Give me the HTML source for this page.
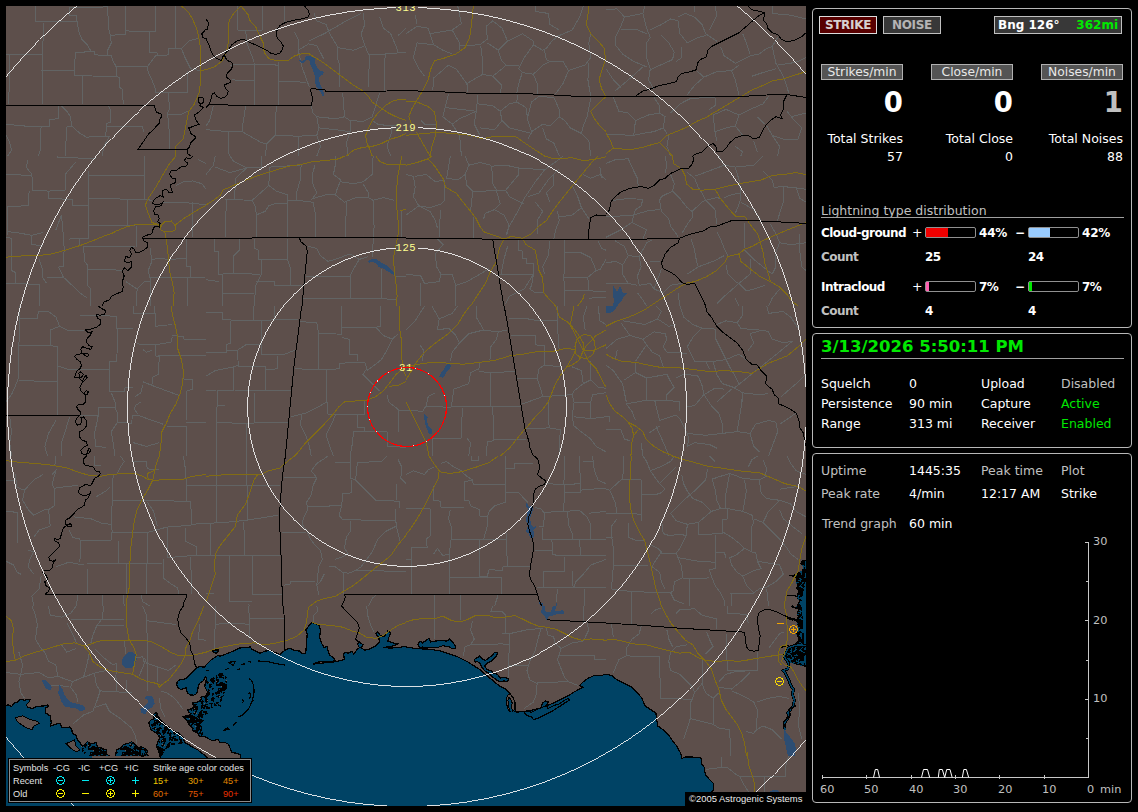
<!DOCTYPE html>
<html><head><meta charset="utf-8"><title>NexStorm</title>
<style>
html,body{margin:0;padding:0;background:#000;}
body{width:1138px;height:812px;position:relative;overflow:hidden;font-family:"DejaVu Sans","Liberation Sans",sans-serif;font-size:12.5px;color:#fff;}
#map{position:absolute;left:6px;top:6px;}
.rl{font-family:"Liberation Mono",monospace;font-size:10.5px;fill:#ffff90;letter-spacing:0.6px;}
.abs{position:absolute;white-space:nowrap;line-height:16px;}
.panel{position:absolute;border:1px solid #b8b8b8;border-radius:4px;box-sizing:border-box;}
.btn{position:absolute;box-sizing:border-box;text-align:center;font-weight:bold;font-size:12px;letter-spacing:-0.3px;line-height:17px;height:18px;}
.lab{position:absolute;box-sizing:border-box;text-align:center;font-size:12.3px;line-height:15px;height:16px;background:#545454;border:1px solid #b0b0b0;color:#e8e8e8;}
.big{position:absolute;font-weight:bold;font-size:27.5px;line-height:26px;text-align:right;}
.r{text-align:right;}
.ax{position:absolute;white-space:nowrap;line-height:14px;font-size:11.3px;color:#c0c0c0;}
.g{color:#c0c0c0;}
.gr{color:#00e800;}
.b{font-weight:bold;font-size:12px;letter-spacing:-0.55px;}
.bar{position:absolute;box-sizing:border-box;width:51px;height:11px;border:1px solid #909090;border-radius:2px;background:#000;}
.bar i{display:block;height:9px;}
.hl{position:absolute;height:1px;background:#a0a0a0;}
#legend{position:absolute;left:0;top:0;width:0;height:0;font-family:"Liberation Sans",sans-serif;font-size:9.2px;}
#legend .in{position:absolute;left:8px;top:758px;width:244px;height:45px;box-sizing:border-box;background:#000;border:1px solid #000;outline:0;box-shadow:inset 0 0 0 1px #8c8c8c;}
#legend span{position:absolute;white-space:nowrap;line-height:11px;color:#e4e4e4;}
#copy{position:absolute;left:685px;top:792px;width:121px;height:14px;background:#000;font-family:"Liberation Sans",sans-serif;font-size:9.45px;line-height:14px;color:#ececec;}
</style></head><body>
<svg id="map" width="800" height="800" viewBox="6 6 800 800" shape-rendering="crispEdges">
<rect x="6" y="6" width="800" height="800" fill="#5d4f4b"/>
<path d="M35.5,6 35.5,21.7 77.1,21.7 M77.1,21.7 76.2,15.2 69.7,15.2 69.7,7.8 107.6,6.9 M77.1,21.7 78.9,31.9 81.7,39.2 87.3,44.8 90.9,51.2 M43.9,22.6 42.9,42.9 42,70.6 42,103.9 M6,54.9 42,54.9 M9.7,54.9 8.8,103.9 M42,70.6 74.3,70.6 M75.3,52.2 74.3,75.3 82.6,75.8 116.8,76.5 M75.3,52.2 94.6,51.8 94.6,54.9 111.3,55.5 M82.6,75.8 82.6,103.9 M107.6,6 108.5,28.2 110.3,35.5 111.3,42.9 107.6,50.3 107.6,54.9 111.3,55.5 113.1,61.4 115.9,66 116.8,76.5 119.6,78 119.6,87.3 122.3,89.1 123.3,103.9 M110.3,35.2 125.1,34.6 125.7,6 M125.7,30.9 155.6,31.9 155.6,6 M150,31.9 149.7,52.2 157.4,53.1 157.4,55.9 M115.9,66 147.3,66.9 M147.3,66.9 155.6,55.9 168.5,54.9 168.5,48.5 181.4,48.5 M147.3,66.9 148.2,72.5 151.9,79.9 155.6,89.1 155.6,92.8 M155.6,92.8 187.9,92.8 187.9,70.6 M175.9,6 175.9,47.6 M181.4,48.5 188.8,41.1 198.1,38.3 M181.4,48.5 185.1,57.7 190.7,68.8 199.9,70.6 M168.5,92.8 169.4,109.4 167.6,113.1 169.4,133.4 169.4,149.1 M167.6,114 179.6,115 187.9,111.3 M58.6,105.7 58.6,118.7 49.4,119.6 49.4,126 24.5,126 6,124.2 M41.1,126 40.2,150 38.3,156 M61.4,105.7 66.9,111.3 70.6,116.8 71.6,126 66.9,127 65.1,156 M71.6,126 79.9,133.4 86.3,137.1 109.4,136.2 M108.5,105.7 110.3,109.4 110.3,122.3 106.6,123.3 105.7,136.2 M106.6,126 142.7,127 143.6,131.6 M109.4,136.2 103.9,146.4 102,156 M6,135.3 9.7,142.7 11.5,150 7.8,156 M237.4,6 237.8,30 245.7,30.9 246.6,40.2 M262.3,6 262.3,30 M237.8,30 262.3,30 M284.5,6 284.5,23.5 M245.7,40.2 254,61.4 254.4,105.7 M230,65.1 254,64.2 278,65.1 M278,61.4 278.9,105.7 M278.9,81.7 305.7,82.1 M231.9,79.9 254,80.8 M298.3,50.3 302,66.9 309.4,87.3 M294.6,31.9 298.3,39.2 298.3,50.3 M308.5,41.1 324.2,33.7 346.4,20.8 361.1,13.4 M298.3,50.3 308.5,43.9 316.8,45.7 324.2,59.6 M329.7,33.7 335.3,42.9 338,47.6 337.1,57.7 339.9,65.1 339,87.3 M338,47.6 353.7,50.3 364.8,45.7 M364.8,45.7 361.1,33.7 364.8,24.5 363,13.4 M364.8,45.7 369.4,55.9 368.5,87.3 M369.4,54.9 385.1,54 406,52.2 M385.1,54 384.2,90.9 M314,13.4 316.8,20.8 326,24.5 329.7,33.7 M379.6,17.1 383.3,28.2 390.7,33.7 396.2,46.6 398.1,52.2 M406,28.2 398.1,35.5 M213.4,105.7 209.7,120.5 206,126 M245.7,105.7 242.9,124.2 242,131.6 228.2,131.6 206,129.7 M228.2,131.6 229.1,156 M242,131.6 261.4,142.7 266.9,143.6 265.1,156 M276.2,105.7 275.3,135.3 298.3,136.2 298.3,156 M266.9,143.6 275.3,135.3 M311.3,105.7 313.1,113.1 316.8,116.8 318.7,127.9 316.8,135.3 298.3,136.2 M316.8,116.8 335.3,118.7 344.5,116.8 342.7,92.8 M344.5,116.8 350,120.5 363,121.4 372.2,116.8 379.6,92.8 M318.7,127.9 335.3,129.7 350,131.6 350,120.5 M350,131.6 346.4,142.7 348.2,156 M316.8,135.3 320.5,146.4 316.8,156 M372.2,120.5 377.7,124.2 390.7,126 406,124.2 M392.5,126 390.7,135.3 387,146.4 390.7,156 M406,33.7 417.1,26.3 428.2,28.2 430,33.7 452.2,30 461.4,23.5 459.6,15.2 457.7,6 M415.2,15.2 417.1,24.5 M430,33.7 433.7,44.8 442.9,50.3 452.2,54 M417.1,42.9 413.4,57.7 418.9,68.8 424.5,76.2 M417.1,42.9 433.7,44.8 M452.2,30 459.6,42.9 459.6,50.3 M459.6,45.7 479.9,44.8 487.3,39.2 486.3,26.3 492.8,20.8 M480.8,45.7 482.6,61.4 482.6,74.3 466.9,83.6 461.4,76.2 455.9,68.8 448.5,65.1 433.7,78 432.8,90 M466.9,83.6 467.9,91.9 M492.8,20.8 502,28.2 507.6,41.1 498.3,50.3 501.1,59.6 505.7,65.1 518.7,66 M498.3,50.3 487.3,42.9 M507.6,41.1 522.3,33.7 533.4,41.1 533.4,44.8 524.2,57.7 518.7,68.8 M482.6,74.3 492.8,76.2 502,68.8 505.7,65.1 M492.8,76.2 502,85.4 500.2,92.8 M518.7,68.8 522.3,72.5 518.7,83.6 516.8,92.8 M522.3,72.5 533.4,74.3 542.7,65.1 550,61.4 563,61.4 568.5,70.6 M533.4,74.3 537.1,83.6 537.1,93.7 M533.4,44.8 542.7,50.3 546.4,48.5 551.9,41.1 559.3,35.5 572.2,30 579.6,17.1 583.3,6 M544.5,50.3 546.4,59.6 550,61.4 M535.3,6 535.3,11.5 548.2,13.4 550,24.5 559.3,30 M568.5,70.6 563,83.6 555.6,93.7 M568.5,70.6 585.1,65.1 590.7,57.7 588.8,42.9 590.7,33.7 M588.8,63.2 587.9,79.9 590.7,96.5 M448.5,93.7 445.7,105.7 442.9,116.8 452.2,124.2 459.6,118.7 476.2,111.3 478,94.6 M445.7,107.6 476.2,111.3 M476.2,111.3 474.3,124.2 479.9,135.3 M478,103.9 492.8,105.7 500.2,111.3 502,120.5 494.6,129.7 479.9,127.9 M500.2,111.3 509.4,103.9 516.8,102 517.7,94.6 M516.8,102 526,107.6 527.9,120.5 531.6,131.6 527.9,139 M502,120.5 509.4,127.9 531.6,133.4 M527.9,116.8 531.6,102 539,96.5 553.7,97.4 M553.7,97.4 559.3,109.4 559.3,116.8 564.8,120.5 570.4,127.9 581.4,133.4 588.8,140.8 590.7,156 M559.3,116.8 550,126 542.7,124.2 531.6,131.6 M590.7,98.3 587,116.8 583.3,126 581.4,133.4 M542.7,127.9 546.4,139 553.7,142.7 559.3,156 M452.2,124.2 459.6,135.3 461.4,156 M420.8,120.5 424.5,124.2 435.5,124.2 M606,9.7 617.1,8.8 624.5,17.1 620.8,26.3 615.2,37.4 615.2,44.8 622.6,54 633.7,61.4 646.6,66.9 M624.5,17.1 633.7,15.2 642.9,13.4 644.8,6 M642.9,13.4 646.6,28.2 650.3,37.4 646.6,42.9 646.6,57.7 650.3,68.8 648.5,79.9 654,89.1 M620.8,30 635.5,29.1 646.6,33.7 M650.3,30 661.4,24.5 670.6,18.9 678,20.8 679.9,33.7 687.3,42.9 M678,17.1 685.4,13.4 694.6,17.1 702,24.5 705.7,33.7 716.8,41.1 M661.4,35.5 668.8,42.9 674.3,52.2 672.5,59.6 650.3,69.7 M681.7,46.6 681.7,57.7 676.2,61.4 M687.3,42.9 698.3,37.4 705.7,35.5 M694.6,6 694.6,11.5 M715,6 716.8,15.2 709.4,30 M606,68.8 613.4,79.9 620.8,87.3 M615.2,90.9 628.2,79.9 642.9,66.9 M720.5,46.6 724.2,55.9 735.3,63.2 750,55.9 759.3,54 766.7,48.5 772.2,46.6 M742.7,33.7 746.4,42.9 750,54 M772.2,46.6 777.7,37.4 M772.2,46.6 775.9,63.2 783.3,76.2 788.8,92.8 M696.5,70.6 703.9,77.1 716.8,71.6 731.6,70.6 739,65.1 M731.6,70.6 735.3,79.9 739,94.6 M703.9,77.1 694.6,85.4 687.3,94.6 M751.9,76.2 763,72.5 775.9,68.8 M806,57.7 798.1,61.4 790.7,63.2 777.7,65.1 M772.2,6 772.2,13.4 790.7,15.2 806,18.9 M613.4,97.4 618.9,111.3 628.2,113.1 635.5,120.5 633.7,135.3 606,134.3 M635.5,120.5 648.5,115 659.6,113.1 665.1,116.8 663.2,127.9 666.9,133.4 M654,97.4 659.6,105.7 659.6,113.1 M670.6,113.1 679.9,103.9 690.9,98.3 715,97.4 M715,98.3 715,105.7 709.4,109.4 M713.1,115 715,131.6 716.8,140.8 M713.1,115 726,109.4 739,115 735.3,126 726,127.9 715,131.6 M739,115 750,109.4 763,103.9 768.5,96.5 M757.4,116.8 764.8,124.2 M735.3,126 742.7,135.3 M633.7,135.3 642.9,133.4 654,131.6 663.2,127.9 M787,111.3 794.4,120.5 801.8,127.9 798.1,139 783.3,139 772.2,135.3 766.7,126 M772.2,135.3 779.6,146.4 777.7,156 M806,113.1 798.1,115 790.7,116.8 M668.8,135.3 666.9,146.4 670.6,156 M753.7,140.8 757.4,151.9 M735.3,146.4 742.7,151.9 740.8,156 M57.7,156 57.7,157.8 96.5,158.2 M28.2,159.7 26.3,167.1 31.9,174.5 32.8,190.2 48.5,191.1 65.1,190.2 M6,174.5 31.9,175.4 M76.2,161.5 65.1,174.5 65.1,190.2 M48.5,191.1 48.5,198.5 72.5,199.4 72.5,205.9 88.2,205.9 M88.2,170.8 88.2,238.2 79.9,238.2 79.9,245.6 M88.2,175.4 144.5,175.4 M144.5,156 144.5,199.4 M88.2,198.5 144.5,199.4 151.9,200.3 M127.9,199.4 127.9,225.3 M88.2,225.3 135.3,225.8 M136.2,226.2 136.2,246.5 M83.6,246.5 135.3,246.5 M83.6,246.5 84.5,261.3 87.3,265 87.3,285.3 90.9,289 90,306 M87.3,269.6 122.3,270.1 M29.1,191.1 28.2,205.9 7.8,206.2 7.8,235.4 M7.8,231.7 17.1,232.6 31.9,235.4 42.9,232.6 M31.9,235.4 31.9,244.6 42.9,245.6 M55.9,229.9 61.4,215.1 63.2,233.6 64.2,248.3 M68.8,239.1 79.9,238.2 M6,237.3 11.5,238.2 11.5,270.5 15.2,272.3 15.2,283.4 M6,283.4 39.2,284.3 39.2,306 M39.2,259.4 42.9,270.5 42.9,277.9 46.6,283.4 M46.6,277 63.2,277 79.9,292.7 87.3,298.2 M58.6,266.8 63.2,277 M64.2,248.3 63.2,266.8 58.6,266.8 M192.5,202.2 192.5,237.3 M163,202.2 192.5,203.1 206,204.9 M175.9,185.5 183.3,181.9 192.5,180.9 201.8,183.7 206,189.2 M206,163.4 198.1,159.7 M150,248.3 151.9,261.3 148.2,270.5 150,277.9 151,306 M151.9,259.4 159.3,258.5 168.5,259.4 186.1,258.5 M186.1,239.1 186.1,266.8 190.7,266.8 190.7,277 M150,277.9 206,277 M126,281.6 137.1,289 136.2,306 M137.1,289 144.5,281.6 150,281.6 M187,277.9 187,306 M261.4,156 261.4,167.1 246.6,168 235.5,178.2 234.6,199.4 M215.2,167.1 230,172.6 246.6,168 M206,174.5 213.4,165.2 215.2,156 M230,156 233.7,161.5 246.6,168 M225.4,199.4 252.2,200.3 268.8,185.5 269.7,167.1 300.2,165.2 M226.3,199.4 225.4,237.3 M252.2,200.3 255.9,207.7 256.8,237.3 M268.8,185.5 276.2,191.1 287.3,194.8 287.3,237.3 M255.9,215.1 265.1,211.4 268.8,205.9 276.2,203.1 287.3,204 M301.1,165.2 300.2,180 296.5,192.9 296.5,200.3 313.1,202.2 315,211.4 315.9,237.3 M287.3,200.3 296.5,200.3 M315,165.2 312.2,174.5 313.1,185.5 316.8,192.9 311.3,200.3 M313.1,198.5 326,194.8 335.3,194.8 344.5,202.2 355.6,197.6 368.5,197.6 373.1,200.3 M335.3,156 335.3,165.2 333.4,174.5 340.8,180 337.1,189.2 335.3,194.8 M346.4,202.2 345.4,237.3 M340.8,181.9 353.7,183.7 363,181.9 372.2,174.5 373.1,156 M363,183.7 368.5,192.9 368.5,197.6 M373.1,200.3 373.1,211.4 374.1,226.2 373.1,242.8 372.2,256.6 M373.1,200.3 383.3,197.6 394.4,200.3 M401.8,209.6 401.8,237.3 M214.3,239.1 214.3,251.1 218.9,252 218.9,274.2 222.6,274.2 222.6,306 M206,279.7 218.9,281.6 M239.2,239.1 239.2,250.2 233.7,255.7 233.7,273.3 M222.6,273.3 259.6,274.2 M254,239.1 254,248.3 258.6,250.2 258.6,259.4 287.3,259.4 M287.3,239.1 287.3,259.4 290,266.8 290,285.3 M261.4,259.4 261.4,274.2 255.9,285.3 254,306 M255.9,281.6 274.3,281.6 274.3,285.3 302,285.3 M222.6,293.6 254,293.6 M308.5,246.5 316.8,248.3 320.5,255.7 327.9,261.3 335.3,259.4 350,253.9 359.3,259.4 368.5,256.6 M359.3,259.4 353.7,268.7 350,276 350,298.2 M305.7,276 350,276 M303,298.2 396.2,299.1 M381.4,268.7 381.4,299.1 M396.2,276 406,277 M406,174.5 413.4,176.3 415.2,187.4 413.4,196.6 418.9,205.9 406,215.1 M418.9,205.9 430,207.7 441.1,204 444.8,200.3 444.8,180 M415.2,176.3 426.3,174.5 435.5,181.9 442.9,180 M450.3,156 448.5,167.1 446.6,178.2 457.7,180 465.1,174.5 468.8,165.2 465.1,156 M465.1,174.5 466.9,185.5 472.5,191.1 471.6,204 470.6,209.6 M468.8,165.2 479.9,162.5 490.9,165.2 492.8,174.5 492.8,183.7 496.5,190.2 472.5,192 M490.9,166.2 505.7,165.2 518.7,168 518.7,174.5 505.7,190.2 496.5,190.2 M518.7,168 531.6,168.9 544.5,169.9 557.4,160.6 563,156 M544.5,169.9 535.3,181.9 527.9,192.9 524.2,198.5 516.8,213.2 509.4,226.2 505.7,235.4 M505.7,190.2 509.4,196.6 524.2,204 M496.5,191.1 500.2,204 494.6,209.6 485.4,213.2 483.6,218.8 M494.6,209.6 503.9,215.1 508.5,224.3 507.6,233.6 M441.1,209.6 439.2,226.2 439.2,237.3 M418.9,205.9 430,211.4 435.5,220.6 437.4,228 M473.4,216.9 473.4,238.2 M559.3,168.9 548.2,180 539,192.9 527.9,196.6 M535.3,202.2 542.7,211.4 537.1,220.6 537.1,233.6 M553.7,174.5 553.7,185.5 546.4,192.9 550,202.2 M557.4,211.4 559.3,220.6 555.6,229.9 553.7,239.1 M572.2,185.5 577.7,196.6 581.4,207.7 572.2,215.1 559.3,216.9 M581.4,207.7 588.8,218.8 M606,180 599.9,174.5 590.7,178.2 583.3,174.5 M599.9,167.1 601.8,178.2 M437.4,239.1 442.9,244.6 435.5,253.9 436.5,266.8 441.1,274.2 439.2,281.6 424.5,283.4 420.8,276 406,274.2 M420.8,283.4 420.8,306 M441.1,274.2 452.2,274.2 455.9,285.3 455.9,306 M455.9,285.3 466.9,281.6 479.9,274.2 489.1,268.7 M518.7,240 518.7,250.2 522.3,251.1 522.3,258.5 526,258.5 526,263.1 533.4,263.1 533.4,274.2 498.3,274.2 M533.4,274.2 531.6,285.3 529.7,289 535.3,292.7 543.6,292.7 M507.6,246.5 503.9,259.4 501.1,274.2 M533.4,274.2 524.2,289 509.4,296.4 505.7,303.7 M550,240.9 548.2,255.7 542.7,266.8 544.5,274.2 M564.8,240 564.8,252 563.9,277.9 564.8,306 M564.8,252 579.6,252 590.7,257.6 596.2,270.5 599.9,269.6 606,259.4 M563.9,277.9 587,277.9 596.2,270.5 M587.9,277.9 588.8,290.8 606,291.7 M564.8,290.8 588.8,290.8 M598.1,240.9 601.8,248.3 606,250.2 M588.8,298.2 606,297.3 M606,163.4 615.2,159.7 628.2,158.8 633.7,170.8 637.4,178.2 638.3,186.5 M665.1,156 666.9,165.2 665.1,172.6 M670.6,174.5 674.3,183.7 672.5,191.1 661.4,196.6 659.6,200.3 661.4,211.4 668.8,218.8 670.6,226.2 676.2,233.6 678,237.3 M672.5,191.1 679.9,198.5 687.3,207.7 691.9,211.4 692.8,216.9 687.3,224.3 681.7,233.6 M613.4,200.3 628.2,198.5 642.9,199.4 641.1,205.9 635.5,209.6 633.7,215.1 606,216.9 M633.7,215.1 648.5,210.5 660.5,209.6 M633.7,215.1 631.9,222.5 639.2,226.2 646.6,229.9 642.9,239.1 M687.3,172.6 694.6,178.2 698.3,187.4 702,192.9 705.7,200.3 715,209.6 716.8,224.3 M694.6,176.3 709.4,170.8 724.2,165.2 718.7,156 M691.9,211.4 702,202.2 705.7,200.3 M705.7,200.3 716.8,197.6 720.5,198.5 M735.3,167.1 739,180 740.8,192.9 739.9,202.2 735.3,213.2 M724.2,165.2 735.3,167.1 753.7,165.2 763,156 M740.8,192.9 731.6,194.8 724.2,197.6 M763,170.8 772.2,180 774.1,187.4 783.3,186.5 790.7,187.4 806,189.2 M783.3,186.5 783.3,202.2 779.6,213.2 777.7,220.6 M740.8,202.2 753.7,209.6 761.1,220.6 M796.2,187.4 799.9,198.5 806,202.2 M744.5,222.5 744.5,248.3 M716.8,231.7 720.5,239.1 724.2,248.3 727.9,255.7 M690.9,239.1 694.6,250.2 696.5,261.3 698.3,266.8 687.3,274.2 M698.3,266.8 713.1,261.3 724.2,255.7 M770.4,224.3 775.9,233.6 779.6,242.8 790.7,244.6 806,242.8 M779.6,242.8 775.9,252 775.9,266.8 772.2,274.2 M799.9,233.6 799.9,252 801.8,266.8 806,270.5 M744.5,250.2 753.7,259.4 763,266.8 772.2,274.2 M726,265 727.9,274.2 735.3,281.6 739,283.4 750,274.2 750,259.4 M739,283.4 724.2,296.4 716.8,303.7 M739,283.4 746.4,290.8 753.7,289 764.8,285.3 M779.6,289 772.2,298.2 768.5,306 M735.3,298.2 739,306 M606,237.3 613.4,233.6 620.8,229.9 631.9,222.5 M615.2,240.9 624.5,246.5 628.2,255.7 639.2,256.6 641.1,266.8 637.4,276 639.2,285.3 650.3,283.4 654,289 M628.2,255.7 622.6,265 622.6,274.2 628.2,283.4 637.4,285.3 M606,263.1 615.2,261.3 622.6,265 M639.2,256.6 646.6,242.8 652.2,240 M650.3,261.3 659.6,261.3 M654,289 659.6,274.2 661.4,268.7 M654,289 663.2,292.7 670.6,285.3 681.7,283.4 M606,283.4 617.1,283.4 628.2,283.4 M637.4,292.7 642.9,300 646.6,306 M678,292.7 679.9,306 M19.9,306 19.9,318.9 37.4,318.9 38.3,311.5 48.5,311.5 55.9,317.1 59.6,326.3 66.9,330 76.2,330.9 83.6,330.9 M79.9,315.2 116.8,316.2 116.8,328.2 133.4,328.2 M133.4,306 133.4,313.4 154.7,313.4 154.7,306 M19.9,318.9 18.9,344.8 18,379.9 11.5,394.6 6,402 M18.9,345.7 50.3,345.7 50.3,330 59.6,326.3 M50.3,345.7 57.7,346.6 57.7,415 M18.9,380.8 56.8,381.3 M57.7,366 68.8,369.7 79.9,369.7 109.4,369.7 M117.7,328.2 116.8,361.4 109.4,361.4 109.4,391.9 124.2,391.9 125.1,387.3 133.4,387.3 M111.3,392.8 115,402 115,407.6 98.3,407.6 98.3,415 96.5,424.2 94.6,433.4 95.6,446.4 105.7,447.3 M79.9,415 98.3,415 M115,407.6 117.7,413.1 117.7,422.3 131.6,423.3 132.5,415 137.1,415 163,424.2 M116.8,423.3 111.3,431.6 113.1,442.7 115,456 M69.7,416.8 65.1,431.6 61.4,442.7 61.4,456 M55.9,420.5 48.5,433.4 44.8,446.4 47.6,456 M9.7,416.8 11.5,431.6 9.7,442.7 11.5,456 M137.1,343.9 155.6,344.8 155.6,355.9 159.3,356.8 158.4,374.3 152.8,377.1 151.9,385.4 M155.6,344.8 171.3,342 172.2,337.4 M155.6,313.4 155.6,326.3 172.2,324.5 M172.2,335.5 183.3,336.5 184.2,339.2 206,339.2 M158.4,355.9 206,355.9 M183.3,378.9 192.5,379.9 192.5,389.1 187,390.9 186.1,420.5 M142.7,381.7 151.9,385.4 179.6,395.6 M142.7,385.4 140.8,392.8 135.3,396.5 M140.8,402 135.3,405.7 134.3,409.4 138,414 M166.7,426 186.1,426 186.1,456 M186.1,422.3 206,422.3 M133.4,442.7 146.4,446.4 159.3,442.7 M142.7,349.4 146.4,352.2 151.9,350.3 M206,312.5 222.6,312.5 222.6,319.9 261.4,320.4 274.3,319.9 298.3,319.9 M253.6,306 253.6,319.9 M274.3,306 274.3,319.9 M230.9,320.8 230.9,342.9 226.3,344.8 226.3,352.2 206,352.2 M261.4,320.8 261.4,354.9 276.2,354.9 285.4,354 294.6,350.3 M226.3,350.3 237.4,350.3 245.7,344.8 259.6,344.8 M237.4,350.3 238.3,365.1 233.7,366.9 233.7,390 217.1,390.9 217.1,405.7 224.5,405.7 M238.3,366 265.1,366 265.1,390 M265.1,369.7 278,368.8 277.1,359.6 277.1,355.9 M233.7,390 290.9,390.6 M206,376.2 215.2,370.6 233.7,366.9 M206,390 216.2,390.9 M217.1,405.7 216.2,422.3 216.2,456 M254,390.9 254.4,422.3 M216.2,422.3 239.2,423.3 288.2,422.3 M246.6,424.2 246.6,456 M300.2,321.7 316.8,322.6 318.7,333.7 318.7,368.8 M294.6,368.8 326,369.7 339,368.8 M318.7,333.7 341.7,334.1 341.7,306 M341.7,327.2 375.9,327.2 380.5,326.3 380.5,306 M341.7,337.4 349.1,339.2 349.1,354 357.4,354.9 357.4,361.4 M339,368.8 339.9,363.2 364.8,362.3 366.7,368.8 363,374.3 368.5,379.9 M375.9,327.2 383.3,335.5 392.5,339.2 398.1,333.7 M392.5,339.2 387,350.3 381.4,359.6 372.2,366.9 366.7,370.6 M326,369.7 327,402 327.9,414 364.8,415 364.8,400.2 M327,402 316.8,407.6 305.7,413.1 290.9,416.8 M302,415 300.2,424.2 305.7,435.3 309.4,446.4 311.3,456 M335.3,415 331.6,424.2 326,435.3 329.7,446.4 333.4,456 M357.4,415 357.4,427.9 364.8,427.9 364.8,431.6 353.7,431.6 351.9,446.4 350,456 M364.8,431.6 387,431.6 387.9,446.4 406,447.3 M387,394.6 388.8,402 398.1,409.4 399,431.6 M398.1,410.3 406,410.3 M368.5,379.9 379.6,390.9 M406,330 415.2,320.8 424.5,306 M431.9,306 439.2,318.9 437.4,330 448.5,328.2 455.9,335.5 459.6,342.9 452.2,352.2 450.3,361.4 M439.2,318.9 452.2,313.4 457.7,306 M419.9,344.8 423.5,350.3 422.6,361.4 M476.2,306 476.2,317.1 481.7,326.3 483.6,330 498.3,331.9 506.6,330 M459.6,342.9 468.8,333.7 483.6,330 M498.3,331.9 496.5,339.2 490.9,346.6 490,359.6 M479.9,363.2 478.9,368.8 470.6,372.5 468.8,383.6 454,389.1 451.2,406.6 M478.9,371.6 490,372.5 515,371.6 M490,372.5 490,406.6 M451.2,406.6 520.5,406.6 M462.3,407.6 461.4,438 432.8,438.6 432.8,456 M492.8,406.6 493.7,440.8 487.3,441.7 486.3,456 M493.7,439 526,439.9 M466.9,438 470.6,442.7 468.8,456 M435.5,392.8 428.2,396.5 426.3,405.7 422.6,411.3 406,410.3 M426.3,406.6 451.2,407.2 M509.4,318.9 527.9,318.9 539,320.8 557.4,320.8 M511.3,335.5 535.3,335.5 535.3,344.8 544.5,345.7 544.5,351.2 M557.4,306 557.4,320.8 558.4,342.9 559.3,350.3 M544.5,352.2 544.5,365.1 561.1,366.9 M516.8,378 537.1,378 539,368.8 544.5,365.1 M537.1,378 540.8,389.1 542.7,396.5 527.9,402 522.3,403.9 M542.7,396.5 559.3,395.6 572.2,394.6 M548.2,402 549.1,427.9 526,428.8 M549.1,427.9 560.2,429.7 559.3,456 M572.2,366.9 581.4,370.6 583.3,383.6 574.1,390.9 572.2,394.6 M572.2,394.6 574.1,402 572.2,416.8 574.1,426 583.3,433.4 590.7,439 596.2,446.4 606,451.9 M574.1,402 590.7,402 592.5,394.6 606,392.8 M574.1,416.8 590.7,418.7 606,416.8 M590.7,402 590.7,418.7 M587,306 583.3,317.1 585.1,330 M598.1,306 599.9,320.8 606,324.5 M590.7,361.4 590.7,379.9 598.1,387.3 606,388.2 M583.3,383.6 590.7,379.9 M620.8,322.6 630,335.5 642.9,339.2 646.6,344.8 635.5,361.4 M646.6,344.8 652.2,352.2 659.6,355.9 663.2,366.9 M642.9,339.2 654,331.9 665.1,333.7 666.9,339.2 663.2,346.6 666.9,352.2 M622.6,320.8 633.7,322.6 644.8,324.5 657.7,318.9 661.4,311.5 655.9,306 M657.7,318.9 668.8,326.3 676.2,324.5 M679.9,306 683.6,317.1 692.8,324.5 702,328.2 715,329.1 M702,328.2 692.8,337.4 687.3,346.6 690.9,354 694.6,361.4 705.7,361.4 709.4,368.8 M715,329.1 715,337.4 720.5,348.5 726,359.6 713.1,361.4 705.7,361.4 M726,359.6 739,354 746.4,359.6 M726,359.6 729.7,366.9 735.3,376.2 739,383.6 M713.1,362.3 716.8,374.3 722.3,383.6 733.4,387.3 742.7,392.8 742.7,402 M735.3,387.3 753.7,372.5 772.2,357.7 792.5,341.1 M698.3,376.2 702,385.4 703.9,394.6 694.6,405.7 687.3,406.6 M703.9,394.6 715,388.2 724.2,389.1 M703.9,394.6 711.3,405.7 718.7,413.1 722.3,424.2 722.3,433.4 M716.8,402 731.6,389.1 M742.7,392.8 740.8,409.4 739,420.5 737.1,431.6 M742.7,392.8 757.4,394.6 768.5,393.7 M687.3,433.4 705.7,435.3 722.3,433.4 737.1,431.6 750,433.4 755.6,424.2 768.5,420.5 775.9,422.3 777.7,431.6 M750,433.4 753.7,446.4 759.3,451.9 M777.7,431.6 772.2,446.4 768.5,456 M779.6,424.2 790.7,416.8 796.2,413.1 M781.4,396.5 796.2,383.6 806,374.3 M737.1,322.6 740.8,328.2 753.7,330 759.3,329.1 M716.8,324.5 726,320.8 737.1,322.6 742.7,315.2 742.7,306 M750,333.7 753.7,342.9 748.2,350.3 M750,333.7 763,330 768.5,331.9 772.2,339.2 783.3,342.9 792.5,341.1 M766.7,306 768.5,313.4 783.3,311.5 790.7,317.1 798.1,328.2 M606,348.5 617.1,339.2 630,335.5 M606,365.1 613.4,370.6 617.1,376.2 622.6,383.6 624.5,392.8 626.3,402 M617.1,350.3 615.2,359.6 M635.5,363.2 635.5,372.5 624.5,379.9 M635.5,372.5 646.6,378 646.6,400.2 M646.6,378 666.9,374.3 670.6,381.7 674.3,387.3 666.9,394.6 666.9,400.2 M626.3,403.9 646.6,400.2 666.9,400.2 679.9,402 679.9,411.3 M654.9,401.1 659.6,420.5 M626.3,403.9 631.9,411.3 635.5,420.5 M659.6,420.5 676.2,415 679.9,418.7 687.3,433.4 689.1,439 687.3,446.4 694.6,442.7 709.4,444.5 716.8,448.2 M648.5,433.4 659.6,426 M655.9,426 665.1,446.4 668.8,456 M606,416.8 609.7,416.8 609.7,422.3 M606,429.7 620.8,429.7 624.5,439 630,440.8 M641.1,442.7 642.9,456 M676.2,378 683.6,374.3 694.6,375.3 698.3,376.2 M687.3,354 676.2,352.2 666.9,352.2 M55.9,456 54.9,465.2 M94.6,456 94.6,465.2 101.1,465.2 M120.5,456 124.2,461.5 120.5,467.1 116.8,474.5 M113.1,475.4 112.2,500.3 111.3,529.9 M133.4,461.5 146.4,461.5 147.3,468.9 159.3,469.9 M183.3,456 185.1,467.1 186.1,480 186.1,501.2 M186.1,485.5 206,485.5 M113.1,500.3 190.7,501.2 191.6,524.3 206,523.4 M147.3,502.2 153.7,511.4 157.4,526.2 M112.2,532.6 147.3,532.6 166.7,527.1 190.7,525.3 M111.3,524.3 102,523.4 90.9,518.8 74.3,516.9 M112.2,529.9 111.3,540 80.8,540.6 79.9,562.2 M118.7,540.6 119,563.1 M147.3,532.6 147.3,563.1 M87.3,564 126,563.1 162,564 M126,564 126,593.6 M146.4,564 146.4,593.6 M87.3,568.7 87.3,593.6 M167.6,527.1 167.6,557.6 179.6,556.6 190.7,555.7 206,555.7 M163,559.4 163,577.9 170.4,583.4 177.7,588 178.7,593.6 M185.1,528 185.1,540.9 196.2,546.5 196.2,554.8 M190.7,556.6 191.6,593.6 M52.2,474.5 55.9,470.8 52.2,483.7 54,488.3 66.9,486.5 78,485.5 M54,488.3 54,505.9 48.5,509.6 50.3,526.2 M15.2,474.5 17.1,487.4 24.5,490.2 33.7,480 42.9,474.5 M6,480.9 15.2,480 M24.5,490.2 22.6,500.3 28.2,509.6 33.7,515.1 44.8,509.6 48.5,509.6 M6,511.4 17.1,512.3 17.1,542.8 M50.3,526.2 39.2,529.9 33.7,537.3 M68.8,529.9 72.5,537.3 79.9,539.1 M96.5,496.6 105.7,491.1 109.4,487.4 M28.2,550.2 33.7,552 30,559.4 28.2,566.8 33.7,574.2 M55.9,566.8 68.8,562.2 83.6,565 M6,561.3 13.4,565 17.1,572.3 20.8,574.2 M41.1,576 39.2,589 31.9,596.4 33.7,606 M78,594.5 76.2,606 M103,594.5 102,606 M123.3,594.5 124.2,606 M140.8,594.5 142.7,601.9 150,606 M216.2,456 216.7,522.5 M246.6,456 247,485.5 247.6,520.6 M206,485.5 279.9,485.5 M206,523.4 224.5,522.5 242.9,520.6 261.4,517.9 278,515.1 M243.9,521.6 244.4,554.8 M210.6,524.3 210.6,555.7 M206,555.7 279.9,555.4 M229.1,555.7 230,601.9 M252.2,555.7 252.5,594.5 281.7,594.5 M206,593.6 214.3,593.6 M230,601.9 252.2,601.9 M248.5,603.7 249.4,606 M283.6,477.2 316.8,477.8 313.1,485.5 311.3,494.8 306.6,502.2 307.6,509.6 303.9,516.9 302,524.3 306.6,529.9 309.4,537.3 313.1,542.8 320.5,550.2 322.3,559.4 318.7,566.8 317.7,576 316.8,585.3 318.7,594.5 M316.8,477.8 311.3,470.8 316.8,463.4 324.2,458.8 327.9,456 M335.3,462.5 350,462.5 350,456 M350,462.5 351,478.2 355.6,480 357.4,462.5 381.4,461.5 387,456 M355.6,480 364.8,489.2 375.9,500.3 399,501.2 399,507.7 M351,480 351,492.9 342.7,493.9 341.7,505.9 308.5,506.2 M341.7,505.9 339,515.1 342.7,519.7 396.2,520.6 M395.3,508.6 396.2,526.2 399.9,540.9 M351,520.6 350,531.7 346.4,537.3 344.5,548.3 348.2,553.9 M281.7,532.1 305.7,532.1 M396.2,526.2 385.1,531.7 377.7,539.1 372.2,552 361.1,566.8 355.6,570.5 M398.1,459.7 401.8,467.1 400.8,478.2 406,483.7 M396.2,483.7 396.2,500.3 M283.6,585.3 290,584.3 290.9,581.6 315,581.2 M335.3,559.4 342.7,556.6 348.2,553.9 M328.8,566.8 335.3,566.8 342.7,572.3 348.2,573.3 355.6,570.5 406,571.4 M343.6,573.3 343.6,593.6 M324.2,574.2 320.5,581.6 316.8,585.3 M368.5,606 372.2,598.2 375.9,595.4 M406,474.5 413.4,470.8 424.5,474.5 428.2,469.9 433.7,467.1 M441.1,463.4 446.6,461.5 454,467.1 461.4,470.8 M471.6,456 471.6,460.6 478.9,460.6 478.9,456 M461.4,471.7 466.9,476.3 472.5,480 473.4,484.6 505.7,484.6 M505.7,456 505.7,468.9 514,468.9 514,463.4 533.4,463 M505.7,468.9 505.7,492.9 518.7,492.9 524.2,498.5 527.9,502.2 M505.7,492.9 505.7,502.2 494.6,505.9 489.1,511.4 487.3,516.9 479.9,516 479.9,509.6 470.6,505.9 468.8,500.3 464.2,500.3 464.2,481.9 472.5,480 M433.7,485.5 433.7,500.3 440.2,501.2 441.1,507.7 464.2,507.7 M406,508.6 430,508.6 430.9,535.4 426.3,539.1 427.2,547.4 411.5,547.4 411.5,593.6 M450.3,509.6 448.5,518.8 451.2,526.2 451.2,539.1 449.4,552 449.4,593.6 M451.2,539.1 479.9,539.5 506.6,539.1 M487.3,516.9 487.3,526.2 483.6,539.1 M479.9,540 479.9,576 487.3,576 489.1,569.6 502,570.5 503,566.8 506.6,566.8 M506.6,532.6 507.2,566.8 529.7,566.8 M450.3,577 479.9,577 501.1,577 501.1,593.6 M433.7,553.9 437.4,548.3 442.9,555.7 449.4,553.9 M406,559.4 411.5,559.4 M564.8,456 563.9,483.7 564.8,496.6 563,511.4 M546.4,483.7 564.8,484.6 579.6,483.7 M579.6,456 580.5,492.9 564.8,492.9 M535.3,507.7 540.8,508.6 544.5,513.2 543.6,526.2 539,526.2 M544.5,512.3 563,511.4 579.6,510.5 587,516.9 590.7,524.3 590.7,539.1 M567.6,512.3 568.5,524.3 572.2,533.6 572.2,539.1 M542.7,528 542.7,539.1 606,539.1 M551.9,540 552.8,554.8 564.8,555.7 606,555.7 M579.6,540 580.5,554.8 M535.3,550.2 552.8,550.2 M564.8,556.6 564.8,571.4 543.6,571.4 543.6,587.1 M572.2,571.4 573.1,587.1 M537.1,587.5 606,588 M606,559.4 590.7,565 583.3,574.2 575.9,581.6 574.1,587.1 M592.5,456 594.4,470.8 598.1,480 606,483.7 M583.3,461.5 594.4,461.5 M580.5,490.2 590.7,489.2 606,488.3 M606,511.4 588.8,513.2 M557.4,589 556.5,601.9 M584.2,589 584.2,606 M434.6,594.5 434.6,606 M460.5,594.5 460.5,606 M498.3,594.5 494.6,606 M606,489.2 609.7,490.2 615.2,502.2 617.1,513.2 641.1,514.2 M609.7,490.2 620.8,480 641.1,479.6 M623.5,456 623.5,467.1 622.6,479.1 M641.1,479.6 642,494.8 641.1,520.6 M642,494.8 659.6,493.9 665.1,489.2 659.6,483.7 650.3,470.8 646.6,461.5 642.9,456 M650.3,470.8 659.6,467.1 670.6,461.5 674.3,456 M659.6,483.7 668.8,474.5 676.2,467.1 M681.7,474.5 683.6,483.7 687.3,491.1 692.8,498.5 702,502.2 711.3,511.4 M670.6,513.2 683.6,500.3 696.5,489.2 705.7,480 707.6,468.9 M670.6,513.2 676.2,520.6 687.3,524.3 698.3,522.5 M698.3,522.5 711.3,511.4 720.5,508.6 727.9,508.6 727.9,518.8 722.3,519.7 722.3,533.6 698.3,534.5 698.3,522.5 M712.2,479.1 715,489.2 716.8,500.3 720.5,508.6 M712.2,479.1 720.5,476.3 729.7,473.5 742.7,478.2 759.3,480 766.7,476.3 M729.7,473.5 726,492.9 725.1,508.6 M744.5,480 746.4,491.1 744.5,502.2 742.7,511.4 M727.9,508.6 742.7,511.4 751.9,515.1 753.7,522.5 751.9,526.2 751.9,552 M759.3,480 761.1,492.9 766.7,498.5 779.6,500.3 M779.6,489.2 790.7,487.4 798.1,486.5 M779.6,500.3 790.7,504 796.2,511.4 806,516.9 M779.6,500.3 768.5,511.4 763,522.5 M753.7,518.8 763,522.5 770.4,529.9 779.6,539.1 787,548.3 790.7,553.9 M779.6,509.6 783.3,518.8 794.4,528 801.8,533.6 M722.3,531.7 731.6,537.3 740.8,544.6 744.5,548.3 735.3,555.7 729.7,557.6 731.6,565 737.1,572.3 742.7,576 753.7,570.5 761.1,568.7 757.4,561.3 755.6,552 751.9,552 744.5,548.3 M715,534.5 715.9,552 724.2,552 726,557.6 M687.3,524.3 686.3,535.4 679.9,548.3 676.2,553 659.6,553 M676.2,553 678,557.6 698.3,561.3 715,562.2 M715,552 715,568.7 709.4,569.6 711.3,576 715,585.3 720.5,592.7 724.2,600 724.2,606 M678,557.6 681.7,566.8 682.6,577.9 674.3,581.6 673.4,590.8 670.6,592.7 M682.6,577.9 689.1,578.8 709.4,577.9 M689.1,578.8 689.1,606 M661.4,519.7 663.2,533.6 668.8,535.4 679.9,534.5 686.3,535.4 M628.2,522.5 628.2,537.3 637.4,540.9 644.8,540.9 M617.1,518.8 611.5,526.2 611.5,535.4 613.4,548.3 613.4,565 611.5,589 631.9,591.7 670.6,592.7 M613.4,565 630,565.9 648.5,565 M650.3,544.6 657.7,548.3 661.4,552 654,563.1 652.2,566.8 M631.9,591.7 631.9,606 M652.2,566.8 659.6,572.3 661.4,581.6 665.1,589 M670.6,592.7 674.3,600 683.6,603.7 M742.7,576 746.4,585.3 753.7,592.7 759.3,589 766.7,587.1 775.9,581.6 783.3,574.2 M757.4,561.3 768.5,563.1 779.6,565 783.3,574.2 M729.7,593.6 753.7,593.6 M731.6,593.6 731.6,606 M766.7,589 768.5,606 M790.7,553.9 798.1,559.4 M606,513.2 617.1,513.2 M606,537.3 613.4,537.3 M748.2,467.1 751.9,459.7 757.4,456 M763,459.7 766.7,468.9 764.8,476.3 M787,456 790.7,463.4 796.2,470.8 806,474.5 M709.4,456 715,461.5 M31.9,606 35.5,615.2 37.4,624.5 35.5,639.2 41.1,648.5 44.8,652.2 M48.5,606 50.3,615.2 61.4,617.1 70.6,613.4 76.2,606 M66.9,622.6 70.6,630 74.3,637.4 76.2,642.9 M70.6,619.9 103.9,619.9 124.2,619.9 M103.9,606 102,618.9 96.5,626.3 92.8,635.5 90.9,642.9 M98.3,625.4 124.2,625.4 M142.7,606 146.4,615.2 147.3,641.1 147.3,690.9 M147.3,620.8 175.9,624.5 M124.2,641.1 126,654 M44.8,652.2 48.5,661.4 55.9,665.1 57.7,676.2 72.5,681.7 83.6,677.1 96.5,672.5 105.7,670.6 M83.6,677.1 87.3,663.2 89.1,654 M94.6,674.3 96.5,685.4 100.2,690.9 96.5,702 92.8,711.3 83.6,715 72.5,724.2 M100.2,690.9 116.8,691.9 131.6,692.8 M116.8,663.2 115.9,676.2 116.8,691.9 M105.7,703.9 109.4,711.3 120.5,718.7 131.6,727.9 135.3,735.3 137.1,744.5 M94.6,707.6 105.7,703.9 M72.5,681.7 70.6,687.3 76.2,694.6 78,702 M18.9,652.2 22.6,665.1 20.8,674.3 18.9,681.7 20.8,692.8 24.5,698.3 M6,672.5 20.8,674.3 M20.8,674.3 39.2,672.5 48.5,678 57.7,676.2 M50.3,685.4 68.8,686.3 M61.4,644.8 66.9,652.2 76.2,648.5 M94.6,648.5 103.9,657.7 113.1,665.1 116.8,663.2 M126,679.9 126,692.8 M157.4,666.9 157.4,681.7 M144.5,657.7 146.4,663.2 157.4,666.9 168.5,670.6 175.9,665.1 M135.3,657.7 142.7,656.8 144.5,663.2 139,676.2 M199.9,624.5 198.1,639.2 206,640.2 M161.1,690.9 166.7,692.8 172.2,696.5 177.7,702 183.3,709.4 M159.3,698.3 161.1,709.4 164.8,716.8 M215.2,606 215.2,624.5 214.3,648.5 M248.5,606 249.4,618 249.4,637.4 M249.4,618 283.6,618.6 M215.2,624.5 222.6,623.5 249.4,624.1 M316.8,606 317.7,611.5 314,615.2 313.1,621.7 M366.7,606 367.6,615.2 370.4,624.5 374.1,631.9 M434.6,606 434.6,639.2 M460.5,606 460.5,619.9 M492.8,606 490.9,611.5 502,611.5 505.7,615.2 505.7,633.7 M472.5,620.8 470.6,630 474.3,639.2 470.6,644.8 465.1,646.6 463.2,655.9 M470.6,644.8 502,643.9 508.5,644.8 M502,633.7 509.4,633.7 508.5,679.9 M509.4,633.7 526,630 542.7,628.2 M540.8,629.1 538,639.2 535.3,650.3 529.7,661.4 527,670.6 529.7,679.9 537.1,683.6 536.2,694.6 533.4,702 524.2,708.5 M508.5,665.1 527.9,665.1 M537.1,682.6 568.5,681.7 577.7,685.4 M546.4,628.2 548.2,635.5 553.7,636.5 554.7,642.9 561.1,648.5 557.4,659.6 561.1,668.8 564.8,678 568.5,681.7 M561.1,648.5 572.2,642.9 583.3,641.1 M559.3,655.9 594.4,655.9 594.4,659.6 606,659.6 M583.3,606 583.3,622.6 M583.3,641.1 588.8,630 587,623.5 M631.9,606 631.9,624.5 M611.5,624.5 613.4,637.4 M641.1,626.3 639.2,633.7 631.9,639.2 626.3,648.5 626.3,655.9 618.9,659.6 613.4,672.5 M626.3,655.9 659.6,656.8 659.6,661.4 660.5,698.3 692.8,699.3 M651.2,613.4 655.9,609.7 661.4,607.8 M676.2,613.4 679.9,609.7 694.6,608.8 702,615.2 716.8,618.9 716.8,629.1 M666.9,630 668.8,639.2 672.5,646.6 M668.8,661.4 670.6,652.2 676.2,646.6 687.3,644.8 M668.8,661.4 670.6,670.6 679.9,674.3 687.3,681.7 692.8,687.3 694.6,692.8 M706.6,631.9 709.4,639.2 713.1,646.6 705.7,654 M702,657.7 702,683.6 694.6,692.8 690,703.9 690.9,716.8 687.3,727.9 683.6,739 M702,683.6 705.7,692.8 713.1,698.3 718.7,692.8 M713.1,698.3 713.1,724.2 718.7,727.9 729.7,729.7 730.7,756 M690.9,718.7 713.1,724.2 M726,633.7 727,659.6 727,670.6 757.4,670.6 M757.4,652.2 757.4,670.6 M727.9,606 727.9,613.4 746.4,614.3 748.2,622.6 M718.7,681.7 726,674.3 735.3,671.6 751.9,670.6 M718.7,687.3 731.6,689.1 742.7,679.9 750,672.5 M731.6,690.9 744.5,696.5 753.7,702 757.4,709.4 756.5,729.7 M757.4,702 768.5,698.3 779.6,696.5 788.8,698.3 M756.5,729.7 763,726 772.2,729.7 777.7,735.3 781.4,739 M746.4,731.6 753.7,733.4 756.5,729.7 M768.5,648.5 779.6,633.7 784.2,631.9 M798.1,692.8 799.9,709.4 798.1,724.2 801.8,739 M721.1,767.5 727.3,767.5 736.1,774.5 739.6,776.3 785.3,776.3 786.1,764 788.8,755.2 M739.6,776.3 743.1,783.3 746.6,788.6 748.4,792.1 M764.2,776.3 764.2,792.1 M721.1,757 721.1,767.5 706.2,769.3" fill="none" stroke="#626464" stroke-width="1"/>
<g fill="#004365" stroke="none"><path d="M6,705.7 7.8,704.8 11.5,706.6 14.3,703 18,702 19.9,699.3 24.5,700.2 30,699.3 29.1,702 26.3,704.8 28.2,707.6 32.8,708.5 36.5,706.6 45.7,705.7 47.6,704.8 48.5,706.6 45.7,707.6 45.7,713.1 50.3,715.9 51.2,722.3 50.3,726 55.9,724.2 60.5,723.3 61.4,727 65.1,727.9 69.7,727 71.6,728.8 72.5,733.4 76.2,735.3 77.1,739 79.9,742.7 82.6,746.4 87.3,741.7 90.9,743.6 96.5,742.7 97.4,747.3 102,748.2 106.6,750 106.6,753.7 109.4,756 6,756Z"/><path d="M115,756 116.8,750 120.5,748.2 123.3,744.5 127.9,743.6 131.6,741.7 135.3,744.5 139,748.2 144.5,750 148.2,756Z"/><path d="M259.9,653.1 265.1,651.2 269.7,650.3 274.3,652.2 279.9,654.4 283.6,651.2 289.1,648.1 294.6,650.3 300.2,651.2 302,654 305.7,653.1 306.6,642.9 307.2,633.7 305.7,630 308.5,626.3 312.2,622.3 315,623.5 318.7,624.5 320.5,630 319.6,637.4 321.4,642.9 324.2,647.6 327,646.6 327.9,650.3 329.7,654.9 333.4,657.7 335.3,660.5 331.6,661.4 324.2,661.4 316.8,662.3 313.1,664.2 320.5,663.2 331.6,662.3 339,661 344.5,659.6 343.6,654.9 344.5,652.2 348.2,653.1 351.9,651.2 353.7,654 356.5,650.3 359.3,647.6 357.4,643.9 359.3,642 363,644.8 361.1,647.6 364.8,650.3 368.5,649.4 372.2,647.6 375.9,645.7 379.6,642 378.7,637.4 375.9,633.7 377.7,631.9 380.5,635.5 384.2,636.5 386.1,633.7 387.9,630.9 390.7,632.8 388.8,637.4 387.9,641.1 392.5,642.9 398.1,643.9 394.4,645.7 388.8,646.6 383.3,647.6 390.7,648.1 398.1,647.6 406,646.3 406,756 259.9,756Z"/><path d="M406,647 413.4,648.1 420.8,648.8 430,649.4 439.2,650.7 448.5,653.6 457.7,656.8 466.9,661.4 474.3,666 479.9,669.7 485.4,674.3 490.9,678.9 496.5,683.6 500.2,686.3 505.7,689.1 509.4,692.8 512.2,696.5 515,702 515.9,707.6 515,711.3 516.8,712.2 524.2,711.3 531.6,710.3 539,708.5 546.4,705.7 553.7,703 561.1,699.3 568.5,695.6 574.1,691.9 579.6,689.1 583.3,687.3 579.6,685.4 583.3,681.7 587,678.9 590.7,677.1 594.4,675.3 598.1,675.8 601.8,675.3 606,674.3 606,756 406,756Z"/><path d="M418,644.8 419.9,641.1 422.6,642.9 426.3,640.2 429.1,638.3 430.9,642 435.5,641.1 441.1,640.2 446.6,641.1 449.4,639.2 452.2,642 454.9,644.8 455.5,648.5 452.2,648.8 448.5,646.6 442.9,645.7 437.4,647.6 431.9,647.6 426.3,648.1 422.6,647 419.9,647.6Z"/><path d="M474.3,659.6 477.1,657.7 479.9,655.9 481.7,658.6 485.4,660.5 489.1,657.7 492.8,654.9 494.6,652.2 497.4,653.1 496.5,655.9 493.7,658.6 490.9,661.4 487.3,663.2 484.5,666 487.3,669.7 490.9,670.6 493.7,673.4 497.4,674.3 500.2,678 504.8,677.1 508.5,678.9 507.6,681.7 503.9,680.8 500.2,681.7 496.5,679.9 492.8,677.1 489.1,673.4 484.5,670.6 481.7,666.9 479.9,663.2 477.1,661.4 475.3,662.3Z"/><path d="M524.2,712.2 527.9,711.3 531.6,712.2 535.3,710.3 540.8,707.6 542.7,703 545.4,701.1 548.2,702 546.4,705.7 548.2,708.5 553.7,705.7 559.3,703.9 564.8,700.2 568.5,698.3 569.4,700.2 564.8,703 559.3,706.6 553.7,710.3 548.2,713.1 542.7,715.9 537.1,718.7 533.4,719.6 531.6,716.8 527.9,715.9 525.1,714Z"/><path d="M606,674.3 611.5,675.3 617.1,679.9 624.5,683.6 631.9,687.3 637.4,692.8 642,698.3 644.8,705.7 650.3,709.4 655.9,713.1 656.8,720.5 657.7,726 663.2,729.7 668.8,735.3 672.5,740.8 677.1,746.4 679.9,751.9 681.7,756 606,756Z"/><path d="M606,755.2 681.7,755.9 681.6,758.7 685.1,757 692.1,757 700.9,757.8 701.8,764 704.4,767.5 705.3,774.5 709.7,779.8 713.2,783.3 713.2,790.4 711.4,792.1 711.4,807.1 606,807.1Z"/><path d="M248,749 608,749 608,806 248,806Z"/><path d="M6,758 260,758 260,806 6,806Z"/><path d="M6,755 92,755 92,759 6,759Z"/><path d="M160,755 206,755 206,759 160,759Z"/><path d="M260,653.3 255.9,651.2 252.1,649.4 250.2,647 239.2,648.1 235.3,650 232,651.7 228.6,652.8 225.3,654.4 222,655.5 219.8,656.1 217.6,655.5 214.2,657.8 210.9,660 208.7,662.2 206.5,664.4 204.3,667.2 199.8,666.6 196.5,667.7 194.3,669.9 192.1,672.2 188.8,675.5 185.4,678.8 182.1,679.7 178.8,680.1 177.1,682.1 176.8,684.9 178.2,687.7 180.4,689.3 183.8,688.8 186,687.7 186.5,690.4 187.6,693.2 190.4,694.9 193.7,695.2 196.5,693.8 197.6,691 198.2,686.6 199.8,683.2 202,681.6 203.7,680.5 204.3,677.7 205.4,676.6 206.5,678.8 205.4,682.1 204.8,686.6 207.6,692.1 205.4,696.5 200.9,697.1 201.5,699.3 197.6,702.1 193.2,702.1 192.6,704.3 194.3,706.5 192.1,708.7 187.6,709.8 188.8,712 191,713.7 188.8,715.4 182.7,716.5 186.5,719.9 188.8,724.3 192.1,727.7 193.2,731 197.6,733.2 199.8,736.5 204.3,736.5 208.7,738.8 213.1,741 217.6,739.3 219.8,742.1 225.3,742.6 228.6,744.3 230.3,748.7 232,752.6 236.4,753.2 240.3,754.8 240.8,758 260,758Z"/><path d="M148.9,722.1 151.1,719.9 154.4,718.8 153.3,714.4 156.6,712.2 157.7,715.5 162.2,722.1 167.7,726.6 173.2,731 178.8,733.2 183.2,737.6 184.3,742.1 189.9,745.4 193.2,747.6 197.6,749.8 202,753.2 206.5,756.5 207.6,758 160.5,758 158.8,752 156.6,746.5 157.7,742.1 159.9,737.6 156.6,733.2 151.1,729.9 149.4,725.5Z"/><path d="M140,746.5 143.3,747.6 146.6,749.8 147.8,752 145.5,755.4 142.2,756.5 140,755.4Z"/><path d="M212.6,650 213.1,652.2 216.5,653.3 218.1,651.1 218.1,650Z"/><path d="M806,560 801,560.6 800.3,564.3 803.4,566.8 801.6,570.5 798.5,572.3 794.2,574.2 792.9,576.6 796.6,578.5 795.4,582.2 797.3,585.2 796,588.9 798.5,591.4 796.6,594.5 797.3,598.2 799.1,601.3 797.3,604.3 795.4,607.4 797.9,609.9 796.6,613.6 797.9,616.7 796,620.3 797.3,624 798.5,627.7 797.3,631.4 795.4,633.9 797.9,637 798.5,640 796,642.5 792.9,645 789.3,646.2 786.8,648.1 787.4,651.7 786.8,655.4 786.2,660 789.3,662.2 796.6,664.7 806,667.1Z"/></g>
<path d="M15.2,717.7 22.6,715.9 30,719.6 37.4,721.4 39.2,723.3 33.7,726 31.9,729.7 26.3,727.9 20.8,724.2 17.1,721.4Z M66,743.6 70.6,741.7 74.3,739.9 76.2,746.4 79.9,750 76.2,751.9 70.6,748.2Z M507.2,696.5 508.7,694.3 511.3,695 513.8,698.7 515,703.9 514.6,709 512.7,711.3 511.6,707.6 512.2,703 510.9,699.3 509,697.4 507.9,700.2 508.5,705.7 510.3,712.2 508.5,710.3 506.8,704.8 506.3,699.3Z" fill="#5d4f4b" stroke="#000" stroke-width="1"/>
<defs><pattern id="mp2" width="32" height="32" patternUnits="userSpaceOnUse"><path d="M0,0h1v1h-1zM0,1h1v1h-1zM0,6h1v1h-1zM0,7h1v1h-1zM0,8h1v1h-1zM0,11h1v1h-1zM0,12h1v1h-1zM0,13h1v1h-1zM0,14h1v1h-1zM0,15h1v1h-1zM0,16h1v1h-1zM0,17h1v1h-1zM0,18h1v1h-1zM0,19h1v1h-1zM0,20h1v1h-1zM0,23h1v1h-1zM0,24h1v1h-1zM0,29h1v1h-1zM0,30h1v1h-1zM0,31h1v1h-1zM1,0h1v1h-1zM1,1h1v1h-1zM1,2h1v1h-1zM1,4h1v1h-1zM1,5h1v1h-1zM1,6h1v1h-1zM1,7h1v1h-1zM1,9h1v1h-1zM1,12h1v1h-1zM1,13h1v1h-1zM1,14h1v1h-1zM1,15h1v1h-1zM1,16h1v1h-1zM1,17h1v1h-1zM1,18h1v1h-1zM1,19h1v1h-1zM1,20h1v1h-1zM1,24h1v1h-1zM1,31h1v1h-1zM2,0h1v1h-1zM2,1h1v1h-1zM2,2h1v1h-1zM2,3h1v1h-1zM2,4h1v1h-1zM2,5h1v1h-1zM2,8h1v1h-1zM2,9h1v1h-1zM2,10h1v1h-1zM2,12h1v1h-1zM2,13h1v1h-1zM2,14h1v1h-1zM2,15h1v1h-1zM2,16h1v1h-1zM2,17h1v1h-1zM2,18h1v1h-1zM2,19h1v1h-1zM2,20h1v1h-1zM2,25h1v1h-1zM2,26h1v1h-1zM2,27h1v1h-1zM2,28h1v1h-1zM2,29h1v1h-1zM2,30h1v1h-1zM2,31h1v1h-1zM3,0h1v1h-1zM3,1h1v1h-1zM3,2h1v1h-1zM3,3h1v1h-1zM3,4h1v1h-1zM3,5h1v1h-1zM3,7h1v1h-1zM3,8h1v1h-1zM3,9h1v1h-1zM3,10h1v1h-1zM3,11h1v1h-1zM3,13h1v1h-1zM3,14h1v1h-1zM3,15h1v1h-1zM3,16h1v1h-1zM3,17h1v1h-1zM3,18h1v1h-1zM3,19h1v1h-1zM3,20h1v1h-1zM3,25h1v1h-1zM3,26h1v1h-1zM3,27h1v1h-1zM3,28h1v1h-1zM3,29h1v1h-1zM3,30h1v1h-1zM3,31h1v1h-1zM4,0h1v1h-1zM4,2h1v1h-1zM4,3h1v1h-1zM4,4h1v1h-1zM4,5h1v1h-1zM4,6h1v1h-1zM4,7h1v1h-1zM4,10h1v1h-1zM4,11h1v1h-1zM4,13h1v1h-1zM4,14h1v1h-1zM4,15h1v1h-1zM4,16h1v1h-1zM4,17h1v1h-1zM4,18h1v1h-1zM4,19h1v1h-1zM4,20h1v1h-1zM4,21h1v1h-1zM4,23h1v1h-1zM4,24h1v1h-1zM4,25h1v1h-1zM4,26h1v1h-1zM4,27h1v1h-1zM4,28h1v1h-1zM4,29h1v1h-1zM4,30h1v1h-1zM4,31h1v1h-1zM5,2h1v1h-1zM5,3h1v1h-1zM5,4h1v1h-1zM5,5h1v1h-1zM5,10h1v1h-1zM5,11h1v1h-1zM5,12h1v1h-1zM5,13h1v1h-1zM5,14h1v1h-1zM5,15h1v1h-1zM5,16h1v1h-1zM5,17h1v1h-1zM5,18h1v1h-1zM5,19h1v1h-1zM5,20h1v1h-1zM5,21h1v1h-1zM5,22h1v1h-1zM5,23h1v1h-1zM5,24h1v1h-1zM5,25h1v1h-1zM5,26h1v1h-1zM5,27h1v1h-1zM5,28h1v1h-1zM6,3h1v1h-1zM6,8h1v1h-1zM6,9h1v1h-1zM6,10h1v1h-1zM6,11h1v1h-1zM6,12h1v1h-1zM6,13h1v1h-1zM6,14h1v1h-1zM6,15h1v1h-1zM6,16h1v1h-1zM6,17h1v1h-1zM6,19h1v1h-1zM6,20h1v1h-1zM6,21h1v1h-1zM6,22h1v1h-1zM6,23h1v1h-1zM6,24h1v1h-1zM6,25h1v1h-1zM6,26h1v1h-1zM6,28h1v1h-1zM6,29h1v1h-1zM7,3h1v1h-1zM7,4h1v1h-1zM7,5h1v1h-1zM7,8h1v1h-1zM7,9h1v1h-1zM7,10h1v1h-1zM7,11h1v1h-1zM7,12h1v1h-1zM7,13h1v1h-1zM7,14h1v1h-1zM7,15h1v1h-1zM7,16h1v1h-1zM7,17h1v1h-1zM7,18h1v1h-1zM7,19h1v1h-1zM7,20h1v1h-1zM7,21h1v1h-1zM7,22h1v1h-1zM7,23h1v1h-1zM7,24h1v1h-1zM7,25h1v1h-1zM7,28h1v1h-1zM7,29h1v1h-1zM7,30h1v1h-1zM7,31h1v1h-1zM8,3h1v1h-1zM8,4h1v1h-1zM8,5h1v1h-1zM8,7h1v1h-1zM8,8h1v1h-1zM8,9h1v1h-1zM8,10h1v1h-1zM8,11h1v1h-1zM8,12h1v1h-1zM8,14h1v1h-1zM8,15h1v1h-1zM8,16h1v1h-1zM8,17h1v1h-1zM8,18h1v1h-1zM8,19h1v1h-1zM8,21h1v1h-1zM8,22h1v1h-1zM8,23h1v1h-1zM8,24h1v1h-1zM8,25h1v1h-1zM8,26h1v1h-1zM8,27h1v1h-1zM8,28h1v1h-1zM8,29h1v1h-1zM8,30h1v1h-1zM8,31h1v1h-1zM9,1h1v1h-1zM9,2h1v1h-1zM9,3h1v1h-1zM9,4h1v1h-1zM9,6h1v1h-1zM9,7h1v1h-1zM9,8h1v1h-1zM9,9h1v1h-1zM9,10h1v1h-1zM9,11h1v1h-1zM9,12h1v1h-1zM9,13h1v1h-1zM9,14h1v1h-1zM9,15h1v1h-1zM9,16h1v1h-1zM9,17h1v1h-1zM9,18h1v1h-1zM9,19h1v1h-1zM9,20h1v1h-1zM9,21h1v1h-1zM9,22h1v1h-1zM9,23h1v1h-1zM9,24h1v1h-1zM9,25h1v1h-1zM9,26h1v1h-1zM9,29h1v1h-1zM9,30h1v1h-1zM9,31h1v1h-1zM10,0h1v1h-1zM10,1h1v1h-1zM10,2h1v1h-1zM10,3h1v1h-1zM10,6h1v1h-1zM10,7h1v1h-1zM10,8h1v1h-1zM10,10h1v1h-1zM10,11h1v1h-1zM10,12h1v1h-1zM10,13h1v1h-1zM10,14h1v1h-1zM10,16h1v1h-1zM10,17h1v1h-1zM10,18h1v1h-1zM10,21h1v1h-1zM10,22h1v1h-1zM10,23h1v1h-1zM10,24h1v1h-1zM10,25h1v1h-1zM10,26h1v1h-1zM10,27h1v1h-1zM10,28h1v1h-1zM10,29h1v1h-1zM10,30h1v1h-1zM10,31h1v1h-1zM11,1h1v1h-1zM11,3h1v1h-1zM11,4h1v1h-1zM11,7h1v1h-1zM11,8h1v1h-1zM11,10h1v1h-1zM11,12h1v1h-1zM11,13h1v1h-1zM11,14h1v1h-1zM11,15h1v1h-1zM11,16h1v1h-1zM11,17h1v1h-1zM11,19h1v1h-1zM11,20h1v1h-1zM11,21h1v1h-1zM11,22h1v1h-1zM11,23h1v1h-1zM11,24h1v1h-1zM11,25h1v1h-1zM11,26h1v1h-1zM11,27h1v1h-1zM11,28h1v1h-1zM11,29h1v1h-1zM12,1h1v1h-1zM12,2h1v1h-1zM12,3h1v1h-1zM12,4h1v1h-1zM12,7h1v1h-1zM12,8h1v1h-1zM12,12h1v1h-1zM12,13h1v1h-1zM12,14h1v1h-1zM12,15h1v1h-1zM12,16h1v1h-1zM12,17h1v1h-1zM12,18h1v1h-1zM12,19h1v1h-1zM12,20h1v1h-1zM12,21h1v1h-1zM12,22h1v1h-1zM12,23h1v1h-1zM12,24h1v1h-1zM12,25h1v1h-1zM13,0h1v1h-1zM13,1h1v1h-1zM13,2h1v1h-1zM13,7h1v1h-1zM13,8h1v1h-1zM13,9h1v1h-1zM13,10h1v1h-1zM13,11h1v1h-1zM13,15h1v1h-1zM13,16h1v1h-1zM13,17h1v1h-1zM13,18h1v1h-1zM13,19h1v1h-1zM13,20h1v1h-1zM13,21h1v1h-1zM13,22h1v1h-1zM13,24h1v1h-1zM13,25h1v1h-1zM13,26h1v1h-1zM13,27h1v1h-1zM13,28h1v1h-1zM13,29h1v1h-1zM14,0h1v1h-1zM14,2h1v1h-1zM14,3h1v1h-1zM14,4h1v1h-1zM14,7h1v1h-1zM14,8h1v1h-1zM14,9h1v1h-1zM14,10h1v1h-1zM14,15h1v1h-1zM14,16h1v1h-1zM14,17h1v1h-1zM14,18h1v1h-1zM14,19h1v1h-1zM14,20h1v1h-1zM14,21h1v1h-1zM14,22h1v1h-1zM14,23h1v1h-1zM14,24h1v1h-1zM14,25h1v1h-1zM14,26h1v1h-1zM14,27h1v1h-1zM14,28h1v1h-1zM14,29h1v1h-1zM14,30h1v1h-1zM15,0h1v1h-1zM15,2h1v1h-1zM15,3h1v1h-1zM15,4h1v1h-1zM15,8h1v1h-1zM15,9h1v1h-1zM15,10h1v1h-1zM15,11h1v1h-1zM15,14h1v1h-1zM15,16h1v1h-1zM15,20h1v1h-1zM15,21h1v1h-1zM15,22h1v1h-1zM15,23h1v1h-1zM15,24h1v1h-1zM15,27h1v1h-1zM15,28h1v1h-1zM15,29h1v1h-1zM16,3h1v1h-1zM16,4h1v1h-1zM16,8h1v1h-1zM16,9h1v1h-1zM16,10h1v1h-1zM16,12h1v1h-1zM16,13h1v1h-1zM16,14h1v1h-1zM16,17h1v1h-1zM16,18h1v1h-1zM16,19h1v1h-1zM16,20h1v1h-1zM16,21h1v1h-1zM16,22h1v1h-1zM16,23h1v1h-1zM17,3h1v1h-1zM17,4h1v1h-1zM17,9h1v1h-1zM17,10h1v1h-1zM17,11h1v1h-1zM17,12h1v1h-1zM17,13h1v1h-1zM17,14h1v1h-1zM17,15h1v1h-1zM17,18h1v1h-1zM17,19h1v1h-1zM17,20h1v1h-1zM17,21h1v1h-1zM17,22h1v1h-1zM17,24h1v1h-1zM17,31h1v1h-1zM18,3h1v1h-1zM18,4h1v1h-1zM18,7h1v1h-1zM18,8h1v1h-1zM18,10h1v1h-1zM18,11h1v1h-1zM18,12h1v1h-1zM18,13h1v1h-1zM18,14h1v1h-1zM18,15h1v1h-1zM18,23h1v1h-1zM18,24h1v1h-1zM18,25h1v1h-1zM18,26h1v1h-1zM18,31h1v1h-1zM19,0h1v1h-1zM19,1h1v1h-1zM19,2h1v1h-1zM19,3h1v1h-1zM19,4h1v1h-1zM19,5h1v1h-1zM19,6h1v1h-1zM19,7h1v1h-1zM19,8h1v1h-1zM19,9h1v1h-1zM19,11h1v1h-1zM19,12h1v1h-1zM19,14h1v1h-1zM19,23h1v1h-1zM19,24h1v1h-1zM19,25h1v1h-1zM19,26h1v1h-1zM19,27h1v1h-1zM19,28h1v1h-1zM19,31h1v1h-1zM20,3h1v1h-1zM20,4h1v1h-1zM20,5h1v1h-1zM20,6h1v1h-1zM20,7h1v1h-1zM20,8h1v1h-1zM20,9h1v1h-1zM20,10h1v1h-1zM20,11h1v1h-1zM20,12h1v1h-1zM20,15h1v1h-1zM20,16h1v1h-1zM20,17h1v1h-1zM20,21h1v1h-1zM20,22h1v1h-1zM20,23h1v1h-1zM20,24h1v1h-1zM20,25h1v1h-1zM20,26h1v1h-1zM20,27h1v1h-1zM20,28h1v1h-1zM20,30h1v1h-1zM20,31h1v1h-1zM21,3h1v1h-1zM21,4h1v1h-1zM21,5h1v1h-1zM21,6h1v1h-1zM21,7h1v1h-1zM21,8h1v1h-1zM21,9h1v1h-1zM21,10h1v1h-1zM21,11h1v1h-1zM21,12h1v1h-1zM21,15h1v1h-1zM21,16h1v1h-1zM21,17h1v1h-1zM21,21h1v1h-1zM21,22h1v1h-1zM21,25h1v1h-1zM21,26h1v1h-1zM21,27h1v1h-1zM21,28h1v1h-1zM21,29h1v1h-1zM21,30h1v1h-1zM21,31h1v1h-1zM22,0h1v1h-1zM22,1h1v1h-1zM22,3h1v1h-1zM22,4h1v1h-1zM22,5h1v1h-1zM22,6h1v1h-1zM22,8h1v1h-1zM22,9h1v1h-1zM22,11h1v1h-1zM22,13h1v1h-1zM22,15h1v1h-1zM22,16h1v1h-1zM22,17h1v1h-1zM22,18h1v1h-1zM22,26h1v1h-1zM22,27h1v1h-1zM22,29h1v1h-1zM22,30h1v1h-1zM22,31h1v1h-1zM23,0h1v1h-1zM23,1h1v1h-1zM23,3h1v1h-1zM23,4h1v1h-1zM23,5h1v1h-1zM23,13h1v1h-1zM23,14h1v1h-1zM23,17h1v1h-1zM23,18h1v1h-1zM23,20h1v1h-1zM23,21h1v1h-1zM23,27h1v1h-1zM23,28h1v1h-1zM23,29h1v1h-1zM23,30h1v1h-1zM23,31h1v1h-1zM24,0h1v1h-1zM24,1h1v1h-1zM24,2h1v1h-1zM24,3h1v1h-1zM24,4h1v1h-1zM24,5h1v1h-1zM24,6h1v1h-1zM24,7h1v1h-1zM24,8h1v1h-1zM24,9h1v1h-1zM24,10h1v1h-1zM24,11h1v1h-1zM24,12h1v1h-1zM24,13h1v1h-1zM24,14h1v1h-1zM24,15h1v1h-1zM24,16h1v1h-1zM24,20h1v1h-1zM24,21h1v1h-1zM24,22h1v1h-1zM24,24h1v1h-1zM24,26h1v1h-1zM24,27h1v1h-1zM24,28h1v1h-1zM24,29h1v1h-1zM24,30h1v1h-1zM24,31h1v1h-1zM25,0h1v1h-1zM25,1h1v1h-1zM25,2h1v1h-1zM25,5h1v1h-1zM25,6h1v1h-1zM25,7h1v1h-1zM25,8h1v1h-1zM25,9h1v1h-1zM25,10h1v1h-1zM25,12h1v1h-1zM25,13h1v1h-1zM25,14h1v1h-1zM25,15h1v1h-1zM25,16h1v1h-1zM25,19h1v1h-1zM25,20h1v1h-1zM25,21h1v1h-1zM25,24h1v1h-1zM25,26h1v1h-1zM25,27h1v1h-1zM25,30h1v1h-1zM25,31h1v1h-1zM26,0h1v1h-1zM26,1h1v1h-1zM26,2h1v1h-1zM26,3h1v1h-1zM26,5h1v1h-1zM26,6h1v1h-1zM26,7h1v1h-1zM26,8h1v1h-1zM26,9h1v1h-1zM26,12h1v1h-1zM26,13h1v1h-1zM26,14h1v1h-1zM26,16h1v1h-1zM26,17h1v1h-1zM26,18h1v1h-1zM26,19h1v1h-1zM26,20h1v1h-1zM26,21h1v1h-1zM26,23h1v1h-1zM26,24h1v1h-1zM26,25h1v1h-1zM26,30h1v1h-1zM26,31h1v1h-1zM27,0h1v1h-1zM27,1h1v1h-1zM27,2h1v1h-1zM27,3h1v1h-1zM27,4h1v1h-1zM27,5h1v1h-1zM27,6h1v1h-1zM27,11h1v1h-1zM27,12h1v1h-1zM27,13h1v1h-1zM27,14h1v1h-1zM27,16h1v1h-1zM27,18h1v1h-1zM27,19h1v1h-1zM27,20h1v1h-1zM27,21h1v1h-1zM27,22h1v1h-1zM27,23h1v1h-1zM27,24h1v1h-1zM27,25h1v1h-1zM27,30h1v1h-1zM27,31h1v1h-1zM28,0h1v1h-1zM28,1h1v1h-1zM28,2h1v1h-1zM28,3h1v1h-1zM28,4h1v1h-1zM28,5h1v1h-1zM28,8h1v1h-1zM28,10h1v1h-1zM28,11h1v1h-1zM28,12h1v1h-1zM28,13h1v1h-1zM28,16h1v1h-1zM28,17h1v1h-1zM28,18h1v1h-1zM28,19h1v1h-1zM28,22h1v1h-1zM28,23h1v1h-1zM28,24h1v1h-1zM28,25h1v1h-1zM28,27h1v1h-1zM28,28h1v1h-1zM28,29h1v1h-1zM29,0h1v1h-1zM29,1h1v1h-1zM29,2h1v1h-1zM29,3h1v1h-1zM29,4h1v1h-1zM29,5h1v1h-1zM29,7h1v1h-1zM29,8h1v1h-1zM29,9h1v1h-1zM29,10h1v1h-1zM29,11h1v1h-1zM29,12h1v1h-1zM29,13h1v1h-1zM29,14h1v1h-1zM29,16h1v1h-1zM29,17h1v1h-1zM29,18h1v1h-1zM29,19h1v1h-1zM29,20h1v1h-1zM29,22h1v1h-1zM29,24h1v1h-1zM29,25h1v1h-1zM29,26h1v1h-1zM29,27h1v1h-1zM29,28h1v1h-1zM29,29h1v1h-1zM29,30h1v1h-1zM29,31h1v1h-1zM30,0h1v1h-1zM30,1h1v1h-1zM30,2h1v1h-1zM30,3h1v1h-1zM30,5h1v1h-1zM30,7h1v1h-1zM30,8h1v1h-1zM30,9h1v1h-1zM30,10h1v1h-1zM30,11h1v1h-1zM30,12h1v1h-1zM30,13h1v1h-1zM30,14h1v1h-1zM30,15h1v1h-1zM30,16h1v1h-1zM30,17h1v1h-1zM30,18h1v1h-1zM30,24h1v1h-1zM30,25h1v1h-1zM30,26h1v1h-1zM30,27h1v1h-1zM30,28h1v1h-1zM30,29h1v1h-1zM30,30h1v1h-1zM30,31h1v1h-1zM31,0h1v1h-1zM31,1h1v1h-1zM31,3h1v1h-1zM31,5h1v1h-1zM31,6h1v1h-1zM31,7h1v1h-1zM31,8h1v1h-1zM31,9h1v1h-1zM31,11h1v1h-1zM31,12h1v1h-1zM31,13h1v1h-1zM31,14h1v1h-1zM31,15h1v1h-1zM31,16h1v1h-1zM31,17h1v1h-1zM31,18h1v1h-1zM31,20h1v1h-1zM31,21h1v1h-1zM31,23h1v1h-1zM31,24h1v1h-1zM31,25h1v1h-1zM31,26h1v1h-1zM31,28h1v1h-1zM31,29h1v1h-1zM31,30h1v1h-1zM31,31h1v1h-1z" fill="#000"/></pattern><pattern id="mp" width="32" height="32" patternUnits="userSpaceOnUse"><path d="M0,11h1v1h-1zM0,12h1v1h-1zM0,13h1v1h-1zM0,14h1v1h-1zM0,15h1v1h-1zM0,16h1v1h-1zM0,17h1v1h-1zM0,18h1v1h-1zM0,19h1v1h-1zM0,20h1v1h-1zM0,23h1v1h-1zM0,24h1v1h-1zM0,29h1v1h-1zM0,30h1v1h-1zM0,31h1v1h-1zM1,0h1v1h-1zM1,1h1v1h-1zM1,4h1v1h-1zM1,5h1v1h-1zM1,6h1v1h-1zM1,9h1v1h-1zM1,12h1v1h-1zM1,13h1v1h-1zM1,14h1v1h-1zM1,15h1v1h-1zM1,16h1v1h-1zM1,17h1v1h-1zM1,18h1v1h-1zM1,19h1v1h-1zM1,24h1v1h-1zM1,31h1v1h-1zM2,0h1v1h-1zM2,1h1v1h-1zM2,3h1v1h-1zM2,4h1v1h-1zM2,5h1v1h-1zM2,8h1v1h-1zM2,9h1v1h-1zM2,10h1v1h-1zM2,12h1v1h-1zM2,13h1v1h-1zM2,14h1v1h-1zM2,15h1v1h-1zM2,16h1v1h-1zM2,17h1v1h-1zM2,18h1v1h-1zM2,20h1v1h-1zM2,26h1v1h-1zM2,27h1v1h-1zM2,28h1v1h-1zM3,0h1v1h-1zM3,1h1v1h-1zM3,2h1v1h-1zM3,3h1v1h-1zM3,4h1v1h-1zM3,5h1v1h-1zM3,7h1v1h-1zM3,8h1v1h-1zM3,9h1v1h-1zM3,13h1v1h-1zM3,14h1v1h-1zM3,16h1v1h-1zM3,17h1v1h-1zM3,18h1v1h-1zM3,20h1v1h-1zM3,26h1v1h-1zM3,27h1v1h-1zM3,28h1v1h-1zM3,29h1v1h-1zM3,30h1v1h-1zM4,0h1v1h-1zM4,2h1v1h-1zM4,3h1v1h-1zM4,4h1v1h-1zM4,5h1v1h-1zM4,6h1v1h-1zM4,7h1v1h-1zM4,13h1v1h-1zM4,14h1v1h-1zM4,15h1v1h-1zM4,16h1v1h-1zM4,17h1v1h-1zM4,18h1v1h-1zM4,19h1v1h-1zM4,20h1v1h-1zM4,21h1v1h-1zM4,23h1v1h-1zM4,24h1v1h-1zM4,25h1v1h-1zM4,26h1v1h-1zM4,27h1v1h-1zM4,28h1v1h-1zM4,29h1v1h-1zM5,2h1v1h-1zM5,3h1v1h-1zM5,4h1v1h-1zM5,5h1v1h-1zM5,12h1v1h-1zM5,14h1v1h-1zM5,15h1v1h-1zM5,16h1v1h-1zM5,17h1v1h-1zM5,19h1v1h-1zM5,20h1v1h-1zM5,21h1v1h-1zM5,22h1v1h-1zM5,23h1v1h-1zM5,24h1v1h-1zM5,25h1v1h-1zM5,26h1v1h-1zM5,27h1v1h-1zM5,28h1v1h-1zM6,10h1v1h-1zM6,11h1v1h-1zM6,12h1v1h-1zM6,13h1v1h-1zM6,15h1v1h-1zM6,16h1v1h-1zM6,17h1v1h-1zM6,19h1v1h-1zM6,20h1v1h-1zM6,21h1v1h-1zM6,22h1v1h-1zM6,23h1v1h-1zM6,24h1v1h-1zM6,25h1v1h-1zM6,26h1v1h-1zM7,8h1v1h-1zM7,9h1v1h-1zM7,10h1v1h-1zM7,11h1v1h-1zM7,12h1v1h-1zM7,13h1v1h-1zM7,14h1v1h-1zM7,15h1v1h-1zM7,16h1v1h-1zM7,17h1v1h-1zM7,18h1v1h-1zM7,19h1v1h-1zM7,20h1v1h-1zM7,21h1v1h-1zM7,22h1v1h-1zM7,23h1v1h-1zM7,24h1v1h-1zM7,25h1v1h-1zM7,28h1v1h-1zM7,29h1v1h-1zM8,7h1v1h-1zM8,8h1v1h-1zM8,9h1v1h-1zM8,10h1v1h-1zM8,11h1v1h-1zM8,12h1v1h-1zM8,15h1v1h-1zM8,16h1v1h-1zM8,17h1v1h-1zM8,18h1v1h-1zM8,19h1v1h-1zM8,21h1v1h-1zM8,22h1v1h-1zM8,25h1v1h-1zM8,26h1v1h-1zM8,27h1v1h-1zM8,28h1v1h-1zM8,29h1v1h-1zM9,1h1v1h-1zM9,2h1v1h-1zM9,3h1v1h-1zM9,4h1v1h-1zM9,6h1v1h-1zM9,7h1v1h-1zM9,8h1v1h-1zM9,9h1v1h-1zM9,10h1v1h-1zM9,11h1v1h-1zM9,12h1v1h-1zM9,13h1v1h-1zM9,15h1v1h-1zM9,16h1v1h-1zM9,17h1v1h-1zM9,18h1v1h-1zM9,19h1v1h-1zM9,20h1v1h-1zM9,21h1v1h-1zM9,22h1v1h-1zM9,23h1v1h-1zM9,24h1v1h-1zM9,25h1v1h-1zM9,26h1v1h-1zM9,29h1v1h-1zM9,30h1v1h-1zM9,31h1v1h-1zM10,0h1v1h-1zM10,1h1v1h-1zM10,2h1v1h-1zM10,3h1v1h-1zM10,6h1v1h-1zM10,10h1v1h-1zM10,11h1v1h-1zM10,12h1v1h-1zM10,13h1v1h-1zM10,16h1v1h-1zM10,17h1v1h-1zM10,18h1v1h-1zM10,21h1v1h-1zM10,22h1v1h-1zM10,28h1v1h-1zM10,29h1v1h-1zM10,30h1v1h-1zM10,31h1v1h-1zM11,1h1v1h-1zM11,3h1v1h-1zM11,4h1v1h-1zM11,7h1v1h-1zM11,8h1v1h-1zM11,10h1v1h-1zM11,12h1v1h-1zM11,13h1v1h-1zM11,16h1v1h-1zM11,17h1v1h-1zM11,19h1v1h-1zM11,20h1v1h-1zM11,21h1v1h-1zM11,29h1v1h-1zM12,1h1v1h-1zM12,2h1v1h-1zM12,3h1v1h-1zM12,4h1v1h-1zM12,7h1v1h-1zM12,8h1v1h-1zM12,12h1v1h-1zM12,20h1v1h-1zM12,21h1v1h-1zM12,22h1v1h-1zM12,24h1v1h-1zM12,25h1v1h-1zM13,0h1v1h-1zM13,1h1v1h-1zM13,2h1v1h-1zM13,7h1v1h-1zM13,8h1v1h-1zM13,9h1v1h-1zM13,10h1v1h-1zM13,11h1v1h-1zM13,21h1v1h-1zM13,22h1v1h-1zM13,24h1v1h-1zM13,25h1v1h-1zM13,26h1v1h-1zM13,27h1v1h-1zM13,28h1v1h-1zM13,29h1v1h-1zM14,0h1v1h-1zM14,2h1v1h-1zM14,3h1v1h-1zM14,4h1v1h-1zM14,7h1v1h-1zM14,8h1v1h-1zM14,9h1v1h-1zM14,10h1v1h-1zM14,17h1v1h-1zM14,18h1v1h-1zM14,19h1v1h-1zM14,20h1v1h-1zM14,21h1v1h-1zM14,22h1v1h-1zM14,23h1v1h-1zM14,24h1v1h-1zM14,25h1v1h-1zM14,26h1v1h-1zM14,27h1v1h-1zM14,28h1v1h-1zM14,29h1v1h-1zM14,30h1v1h-1zM15,0h1v1h-1zM15,2h1v1h-1zM15,3h1v1h-1zM15,4h1v1h-1zM15,9h1v1h-1zM15,10h1v1h-1zM15,11h1v1h-1zM15,20h1v1h-1zM15,22h1v1h-1zM15,23h1v1h-1zM15,24h1v1h-1zM15,27h1v1h-1zM15,28h1v1h-1zM15,29h1v1h-1zM16,3h1v1h-1zM16,4h1v1h-1zM16,10h1v1h-1zM16,17h1v1h-1zM16,18h1v1h-1zM16,19h1v1h-1zM16,20h1v1h-1zM16,21h1v1h-1zM16,22h1v1h-1zM16,23h1v1h-1zM17,3h1v1h-1zM17,4h1v1h-1zM17,10h1v1h-1zM17,12h1v1h-1zM17,13h1v1h-1zM17,14h1v1h-1zM17,15h1v1h-1zM17,18h1v1h-1zM17,20h1v1h-1zM17,21h1v1h-1zM17,22h1v1h-1zM17,31h1v1h-1zM18,7h1v1h-1zM18,8h1v1h-1zM18,12h1v1h-1zM18,13h1v1h-1zM18,14h1v1h-1zM18,15h1v1h-1zM18,31h1v1h-1zM19,0h1v1h-1zM19,1h1v1h-1zM19,2h1v1h-1zM19,3h1v1h-1zM19,6h1v1h-1zM19,7h1v1h-1zM19,8h1v1h-1zM19,9h1v1h-1zM19,12h1v1h-1zM19,14h1v1h-1zM19,26h1v1h-1zM19,27h1v1h-1zM19,28h1v1h-1zM19,31h1v1h-1zM20,3h1v1h-1zM20,4h1v1h-1zM20,5h1v1h-1zM20,6h1v1h-1zM20,7h1v1h-1zM20,8h1v1h-1zM20,9h1v1h-1zM20,10h1v1h-1zM20,16h1v1h-1zM20,17h1v1h-1zM20,21h1v1h-1zM20,22h1v1h-1zM20,23h1v1h-1zM20,25h1v1h-1zM20,26h1v1h-1zM20,27h1v1h-1zM20,28h1v1h-1zM20,31h1v1h-1zM21,3h1v1h-1zM21,4h1v1h-1zM21,5h1v1h-1zM21,6h1v1h-1zM21,7h1v1h-1zM21,8h1v1h-1zM21,9h1v1h-1zM21,10h1v1h-1zM21,11h1v1h-1zM21,16h1v1h-1zM21,21h1v1h-1zM21,22h1v1h-1zM21,25h1v1h-1zM21,26h1v1h-1zM21,27h1v1h-1zM21,28h1v1h-1zM21,29h1v1h-1zM22,0h1v1h-1zM22,1h1v1h-1zM22,6h1v1h-1zM22,8h1v1h-1zM22,9h1v1h-1zM22,26h1v1h-1zM22,31h1v1h-1zM23,0h1v1h-1zM23,1h1v1h-1zM23,20h1v1h-1zM23,21h1v1h-1zM24,1h1v1h-1zM24,2h1v1h-1zM24,3h1v1h-1zM24,4h1v1h-1zM24,5h1v1h-1zM24,6h1v1h-1zM24,7h1v1h-1zM24,8h1v1h-1zM24,9h1v1h-1zM24,10h1v1h-1zM24,11h1v1h-1zM24,12h1v1h-1zM24,13h1v1h-1zM24,20h1v1h-1zM24,21h1v1h-1zM24,22h1v1h-1zM24,24h1v1h-1zM24,30h1v1h-1zM24,31h1v1h-1zM25,1h1v1h-1zM25,2h1v1h-1zM25,5h1v1h-1zM25,7h1v1h-1zM25,8h1v1h-1zM25,9h1v1h-1zM25,10h1v1h-1zM25,12h1v1h-1zM25,13h1v1h-1zM25,19h1v1h-1zM25,20h1v1h-1zM25,21h1v1h-1zM25,24h1v1h-1zM25,30h1v1h-1zM25,31h1v1h-1zM26,0h1v1h-1zM26,1h1v1h-1zM26,2h1v1h-1zM26,3h1v1h-1zM26,7h1v1h-1zM26,8h1v1h-1zM26,9h1v1h-1zM26,12h1v1h-1zM26,13h1v1h-1zM26,16h1v1h-1zM26,17h1v1h-1zM26,18h1v1h-1zM26,19h1v1h-1zM26,20h1v1h-1zM26,21h1v1h-1zM26,23h1v1h-1zM26,24h1v1h-1zM26,25h1v1h-1zM26,30h1v1h-1zM27,1h1v1h-1zM27,2h1v1h-1zM27,3h1v1h-1zM27,4h1v1h-1zM27,5h1v1h-1zM27,11h1v1h-1zM27,12h1v1h-1zM27,13h1v1h-1zM27,16h1v1h-1zM27,18h1v1h-1zM27,19h1v1h-1zM27,20h1v1h-1zM27,21h1v1h-1zM27,23h1v1h-1zM28,1h1v1h-1zM28,2h1v1h-1zM28,3h1v1h-1zM28,4h1v1h-1zM28,5h1v1h-1zM28,10h1v1h-1zM28,11h1v1h-1zM28,12h1v1h-1zM28,13h1v1h-1zM28,16h1v1h-1zM28,17h1v1h-1zM28,18h1v1h-1zM28,19h1v1h-1zM28,25h1v1h-1zM28,27h1v1h-1zM28,28h1v1h-1zM28,29h1v1h-1zM29,0h1v1h-1zM29,1h1v1h-1zM29,2h1v1h-1zM29,3h1v1h-1zM29,4h1v1h-1zM29,5h1v1h-1zM29,10h1v1h-1zM29,11h1v1h-1zM29,12h1v1h-1zM29,13h1v1h-1zM29,16h1v1h-1zM29,17h1v1h-1zM29,18h1v1h-1zM29,19h1v1h-1zM29,20h1v1h-1zM29,24h1v1h-1zM29,25h1v1h-1zM29,26h1v1h-1zM29,27h1v1h-1zM29,28h1v1h-1zM29,29h1v1h-1zM29,31h1v1h-1zM30,0h1v1h-1zM30,1h1v1h-1zM30,2h1v1h-1zM30,3h1v1h-1zM30,5h1v1h-1zM30,10h1v1h-1zM30,11h1v1h-1zM30,12h1v1h-1zM30,13h1v1h-1zM30,14h1v1h-1zM30,15h1v1h-1zM30,16h1v1h-1zM30,17h1v1h-1zM30,18h1v1h-1zM30,24h1v1h-1zM30,25h1v1h-1zM30,26h1v1h-1zM30,27h1v1h-1zM30,28h1v1h-1zM30,29h1v1h-1zM30,31h1v1h-1zM31,0h1v1h-1zM31,3h1v1h-1zM31,5h1v1h-1zM31,6h1v1h-1zM31,11h1v1h-1zM31,12h1v1h-1zM31,13h1v1h-1zM31,14h1v1h-1zM31,15h1v1h-1zM31,16h1v1h-1zM31,17h1v1h-1zM31,18h1v1h-1zM31,20h1v1h-1zM31,21h1v1h-1zM31,23h1v1h-1zM31,24h1v1h-1zM31,25h1v1h-1zM31,26h1v1h-1zM31,28h1v1h-1zM31,29h1v1h-1zM31,31h1v1h-1z" fill="#000"/><path d="M24,9h1v1h-1zM11,13h1v1h-1zM0,31h1v1h-1zM15,28h1v1h-1zM12,31h1v1h-1zM2,4h1v1h-1zM2,8h1v1h-1zM12,24h1v1h-1zM29,14h1v1h-1zM27,24h1v1h-1zM10,23h1v1h-1zM3,22h1v1h-1zM4,9h1v1h-1zM17,10h1v1h-1z" fill="#6a5a52"/></pattern></defs><g fill="url(#mp)" stroke="none"><path d="M79.9,742.7 82.6,746.4 87.3,741.7 90.9,743.6 96.5,742.7 97.4,747.3 102,748.2 106.6,750 106.6,756 83.6,756Z"/><path d="M115,756 116.8,750 120.5,748.2 123.3,744.5 127.9,743.6 131.6,741.7 135.3,744.5 139,748.2 144.5,750 148.2,756Z"/><path d="M205.4,676.6 210.9,678.8 216.5,675.5 220.9,672.2 224.2,674.4 227.5,678.8 226.4,683.2 227.5,687.7 224.2,691 225.3,694.3 222,697.6 222,701 219.8,703.2 222,707.6 217.6,705.4 213.1,707.6 210.9,710.9 206.5,714.3 203.2,716.5 204.3,720.9 200.9,723.1 202,727.6 203.2,732 202,736.4 198.7,737.5 197.6,733.2 193.2,731 192.1,727.7 188.8,724.3 186.5,719.9 182.7,716.5 188.8,715.4 191,713.7 188.8,712 187.6,709.8 192.1,708.7 194.3,706.5 192.6,704.3 193.2,702.1 197.6,702.1 201.5,699.3 200.9,697.1 205.4,696.5 207.6,692.1 204.8,686.6 205.4,682.1 206.5,678.8Z"/><path d="M148.9,722.1 151.1,719.9 154.4,718.8 153.3,714.4 156.6,712.2 157.7,715.5 162.2,722.1 167.7,726.6 173.2,731 178.8,733.2 183.2,737.6 184.3,742.1 181,744.3 176.6,743.2 173.2,745.4 169.9,746.5 165.5,749.8 162.2,755.4 160.5,757.6 158.8,752 156.6,746.5 157.7,742.1 159.9,737.6 156.6,733.2 151.1,729.9 149.4,725.5Z"/></g>
<g fill="url(#mp2)" stroke="none"><path d="M806,560 801,560.6 800.3,564.3 803.4,566.8 801.6,570.5 798.5,572.3 794.2,574.2 792.9,576.6 796.6,578.5 795.4,582.2 797.3,585.2 796,588.9 798.5,591.4 796.6,594.5 797.3,598.2 799.1,601.3 797.3,604.3 795.4,607.4 797.9,609.9 796.6,613.6 797.9,616.7 796,620.3 797.3,624 798.5,627.7 797.3,631.4 795.4,633.9 797.9,637 798.5,640 796,642.5 792.9,645 789.3,646.2 786.8,648.1 787.4,651.7 786.8,655.4 786.2,660 789.3,662.2 796.6,664.7 806,667.1Z"/></g>
<g fill="#004365" stroke="none"><path d="M806,584.6 804.3,587.7 802.6,594.5 801.8,603.1 802.3,611.7 802.8,621.6 803.5,631.4 804,640 804.8,646.2 806,648.7Z"/><path d="M806,560 804.6,563.7 805,567.4 806,569.9Z"/><path d="M806,653.6 804,657.3 804.3,662.2 806,665.9Z"/></g>
<g fill="#2d4d72" stroke="none"><path d="M299.3,59.6 302,61.4 304.8,59.6 305.7,56.8 308.5,55.5 312.2,56.8 315,58.6 315.3,63.2 317.7,67.9 320.5,70.6 323.8,71.6 323.3,74.3 319.6,76.2 319,79.9 320.5,85.4 323.3,90 323.8,95.6 322.3,96.5 320.5,91.9 316.8,87.3 315,82.6 315,77.1 313.1,70.6 310.3,65.1 309.4,60.5 306.6,59.6 304.8,62.3 301.1,62.9 299.3,60.5Z"/><path d="M368.1,261.3 371.3,259.4 375,258.5 379.6,261.3 383.3,264 387.9,265.9 390.7,269.6 394.4,273.3 396.2,277 393.4,275.1 387.9,271.4 383.3,268.7 378.7,266.8 375.9,263.1 372.2,261.6 369.4,263.1Z"/><path d="M612.5,289 613.4,286.2 615.2,289 617.1,291.7 619.9,286.2 621.7,289 622.6,292.7 627.2,293.6 623.5,297.3 620.8,301.9 617.1,306 612.5,306 614.3,300 612.5,296.4 613.4,292.7Z"/><path d="M439.2,377.1 441.1,372.5 443.9,369.7 445.7,365.1 448.5,363.2 451.2,366 449.4,369.7 446.6,371.6 444.8,375.3 442.9,377.7Z"/><path d="M424.1,413.1 425.9,415 427.8,416.8 426.7,421.4 428.5,426 431.5,428.8 431.9,433.4 429.1,434.3 427.2,429.7 425.4,425.1 424.5,419.6Z"/><path d="M606,306 617.1,306 615.2,309.7 611.5,312.5 607.8,313.4 606,312.5Z"/><path d="M526,502.2 527.9,504 528.8,506.8 531.6,505.9 533.4,508.6 531.6,513.2 530.1,518.8 531.2,524.3 533.4,527.1 537.1,525.3 535.3,528 533.4,529.9 534.3,535.4 532.5,538.7 530.1,537.3 528.8,533.6 525.7,531.7 527,528.9 527.9,526.2 526,520.6 527,513.2 528.3,509.6 526.4,506.8Z"/><path d="M539,601.9 542.7,602.8 543.6,606 539.9,606Z"/><path d="M555.6,603.7 557.4,602.8 556.5,606Z"/><path d="M124.2,655.9 127.9,652.5 132.5,652.2 136.2,654.9 136.7,659.6 134.3,665.1 130.7,668.4 126,667.9 122.3,665.1 122,660.5Z"/><path d="M42,680.2 45.7,679.9 49.4,683.6 51.8,687.3 50.3,690 46.6,689.1 43.9,685.4Z"/><path d="M58.6,684.5 60.5,686.3 63.2,690 64.2,694.6 66.9,698.3 70.6,702 77.1,703.9 81.7,704.8 84.5,706.6 84.5,710.3 79.9,710.9 76.2,708.5 70.6,707.6 65.1,706.6 61.4,702 59.6,696.5 57.7,692.8 59.6,689.1Z"/><path d="M144.5,698.3 147.3,695.6 151.9,695.6 153.7,699.3 154.7,703.9 151.9,707.6 148.2,709.4 145.4,714 141.7,713.1 140.4,709.4 143.6,706.6 147.3,703.9 148.2,700.2Z"/><path d="M541.7,606 541.4,613.4 544.5,616.2 546.7,620.4 548.6,616.7 553.7,615.2 559.3,613.8 563.9,613.8 563.3,610.1 558.4,611.2 554.7,611.5 556.5,606 552.8,606 551,611.5 547.3,612.5 544.5,610.6 544.9,606Z"/><path d="M784.2,729.7 788.8,735.3 794.4,742.7 796.2,750 794.4,756 787.9,756 786.1,748.2 784.2,739Z"/><path d="M769.4,792.1 773,789.5 777.4,789.5 779.1,792.1Z"/></g>
<path d="M806,645.7 799.9,644.8 794.4,645.7 788.8,647.6 786.1,652.2 784.2,655.9 786.1,659.6 788.8,663.2 787.9,668.8 783.3,670.6 786.1,674.3 788.8,679.9 790.7,685.4 793.4,689.1 792.5,694.6 794.4,700.2 793.4,705.7 790.7,709.4 787.9,713.1 788.8,716.8 786.1,720.5 784.2,724.2 785.1,729.7" fill="none" stroke="#000" stroke-width="3"/>
<path d="M806,645.7 799.9,644.8 794.4,645.7 788.8,647.6 786.1,652.2 784.2,655.9 786.1,659.6 788.8,663.2 787.9,668.8 783.3,670.6 786.1,674.3 788.8,679.9 790.7,685.4 793.4,689.1 792.5,694.6 794.4,700.2 793.4,705.7 790.7,709.4 787.9,713.1 788.8,716.8 786.1,720.5 784.2,724.2 785.1,729.7" fill="none" stroke="#004365" stroke-width="1.4"/>
<path d="M6,705.7 7.8,704.8 11.5,706.6 14.3,703 18,702 19.9,699.3 24.5,700.2 30,699.3 29.1,702 26.3,704.8 28.2,707.6 32.8,708.5 36.5,706.6 45.7,705.7 47.6,704.8 48.5,706.6 45.7,707.6 45.7,713.1 50.3,715.9 51.2,722.3 50.3,726 55.9,724.2 60.5,723.3 61.4,727 65.1,727.9 69.7,727 71.6,728.8 72.5,733.4 76.2,735.3 77.1,739 79.9,742.7 82.6,746.4 87.3,741.7 90.9,743.6 96.5,742.7 97.4,747.3 102,748.2 106.6,750 106.6,753.7 109.4,756 M115,756 116.8,750 120.5,748.2 123.3,744.5 127.9,743.6 131.6,741.7 135.3,744.5 139,748.2 144.5,750 148.2,756 M259.9,653.1 265.1,651.2 269.7,650.3 274.3,652.2 279.9,654.4 283.6,651.2 289.1,648.1 294.6,650.3 300.2,651.2 302,654 305.7,653.1 306.6,642.9 307.2,633.7 305.7,630 308.5,626.3 312.2,622.3 315,623.5 318.7,624.5 320.5,630 319.6,637.4 321.4,642.9 324.2,647.6 327,646.6 327.9,650.3 329.7,654.9 333.4,657.7 335.3,660.5 331.6,661.4 324.2,661.4 316.8,662.3 313.1,664.2 320.5,663.2 331.6,662.3 339,661 344.5,659.6 343.6,654.9 344.5,652.2 348.2,653.1 351.9,651.2 353.7,654 356.5,650.3 359.3,647.6 357.4,643.9 359.3,642 363,644.8 361.1,647.6 364.8,650.3 368.5,649.4 372.2,647.6 375.9,645.7 379.6,642 378.7,637.4 375.9,633.7 377.7,631.9 380.5,635.5 384.2,636.5 386.1,633.7 387.9,630.9 390.7,632.8 388.8,637.4 387.9,641.1 392.5,642.9 398.1,643.9 394.4,645.7 388.8,646.6 383.3,647.6 390.7,648.1 398.1,647.6 406,646.3 M257.7,661 266.9,661.4 276.2,663.6 285.4,665.1 M406,647 413.4,648.1 420.8,648.8 430,649.4 439.2,650.7 448.5,653.6 457.7,656.8 466.9,661.4 474.3,666 479.9,669.7 485.4,674.3 490.9,678.9 496.5,683.6 500.2,686.3 505.7,689.1 509.4,692.8 512.2,696.5 515,702 515.9,707.6 515,711.3 516.8,712.2 524.2,711.3 531.6,710.3 539,708.5 546.4,705.7 553.7,703 561.1,699.3 568.5,695.6 574.1,691.9 579.6,689.1 583.3,687.3 579.6,685.4 583.3,681.7 587,678.9 590.7,677.1 594.4,675.3 598.1,675.8 601.8,675.3 606,674.3 M418,644.8 419.9,641.1 422.6,642.9 426.3,640.2 429.1,638.3 430.9,642 435.5,641.1 441.1,640.2 446.6,641.1 449.4,639.2 452.2,642 454.9,644.8 455.5,648.5 452.2,648.8 448.5,646.6 442.9,645.7 437.4,647.6 431.9,647.6 426.3,648.1 422.6,647 419.9,647.6 418,644.8 M474.3,659.6 477.1,657.7 479.9,655.9 481.7,658.6 485.4,660.5 489.1,657.7 492.8,654.9 494.6,652.2 497.4,653.1 496.5,655.9 493.7,658.6 490.9,661.4 487.3,663.2 484.5,666 487.3,669.7 490.9,670.6 493.7,673.4 497.4,674.3 500.2,678 504.8,677.1 508.5,678.9 507.6,681.7 503.9,680.8 500.2,681.7 496.5,679.9 492.8,677.1 489.1,673.4 484.5,670.6 481.7,666.9 479.9,663.2 477.1,661.4 475.3,662.3 474.3,659.6 M524.2,712.2 527.9,711.3 531.6,712.2 535.3,710.3 540.8,707.6 542.7,703 545.4,701.1 548.2,702 546.4,705.7 548.2,708.5 553.7,705.7 559.3,703.9 564.8,700.2 568.5,698.3 569.4,700.2 564.8,703 559.3,706.6 553.7,710.3 548.2,713.1 542.7,715.9 537.1,718.7 533.4,719.6 531.6,716.8 527.9,715.9 525.1,714 524.2,712.2 M606,674.3 611.5,675.3 617.1,679.9 624.5,683.6 631.9,687.3 637.4,692.8 642,698.3 644.8,705.7 650.3,709.4 655.9,713.1 656.8,720.5 657.7,726 663.2,729.7 668.8,735.3 672.5,740.8 677.1,746.4 679.9,751.9 681.7,756 M681.7,755.9 681.6,758.7 685.1,757 692.1,757 700.9,757.8 701.8,764 704.4,767.5 705.3,774.5 709.7,779.8 713.2,783.3 713.2,790.4 711.4,792.1 M795.8,706 788.8,709.5 790.5,714.8 787,718.3 783.5,721.8 784.4,727.1 M260,653.3 255.9,651.2 252.1,649.4 250.2,647 239.2,648.1 235.3,650 232,651.7 228.6,652.8 225.3,654.4 222,655.5 219.8,656.1 217.6,655.5 214.2,657.8 210.9,660 208.7,662.2 206.5,664.4 204.3,667.2 199.8,666.6 196.5,667.7 194.3,669.9 192.1,672.2 188.8,675.5 185.4,678.8 182.1,679.7 178.8,680.1 177.1,682.1 176.8,684.9 178.2,687.7 180.4,689.3 183.8,688.8 186,687.7 186.5,690.4 187.6,693.2 190.4,694.9 193.7,695.2 196.5,693.8 197.6,691 198.2,686.6 199.8,683.2 202,681.6 203.7,680.5 204.3,677.7 205.4,676.6 206.5,678.8 205.4,682.1 204.8,686.6 207.6,692.1 205.4,696.5 200.9,697.1 201.5,699.3 197.6,702.1 193.2,702.1 192.6,704.3 194.3,706.5 192.1,708.7 187.6,709.8 188.8,712 191,713.7 188.8,715.4 182.7,716.5 186.5,719.9 188.8,724.3 192.1,727.7 193.2,731 197.6,733.2 199.8,736.5 204.3,736.5 208.7,738.8 213.1,741 217.6,739.3 219.8,742.1 225.3,742.6 228.6,744.3 230.3,748.7 232,752.6 236.4,753.2 240.3,754.8 240.8,758 M148.9,722.1 151.1,719.9 154.4,718.8 153.3,714.4 156.6,712.2 157.7,715.5 162.2,722.1 167.7,726.6 173.2,731 178.8,733.2 183.2,737.6 184.3,742.1 189.9,745.4 193.2,747.6 197.6,749.8 202,753.2 206.5,756.5 207.6,758 M160.5,758 158.8,752 156.6,746.5 157.7,742.1 159.9,737.6 156.6,733.2 151.1,729.9 149.4,725.5 148.9,722.1 M140,746.5 143.3,747.6 146.6,749.8 147.8,752 145.5,755.4 142.2,756.5 140,755.4 140,746.5 M212.6,650 213.1,652.2 216.5,653.3 218.1,651.1 218.1,650 212.6,650 M228.6,662.2 235.3,661.6 233.1,665.5 228.6,662.2 M240.8,664.4 245.3,663.9 M248.6,661.1 250.8,662.2 M225.3,669.9 228.6,668.3 M206.5,669.9 209.3,671.1 M249.1,678.3 251.9,681 253.6,685.5 254.1,691 253.6,695.4 252.5,699.9 250.8,704.3 248.6,708.7 245.3,712 241.9,715.4 238.6,717 M247.5,694.3 249.7,692.7 250.8,696.5 249.1,698.8 M241.9,698.8 243.6,701 242.5,702.6 M233.1,725.3 237.5,721.5 M223.1,730.9 227.5,727.6 228.6,729.2 223.1,730.9 M250.8,702.1 254.1,700.4 M237.5,669.9 239.7,668.8 M786.8,595.7 792.9,595.1 797.9,596.9 M791.1,606.8 795.4,607.4 799.1,609.3 M786.8,617.9 792.9,619.1 797.9,621.6 M789.3,575.4 792.9,576 796.6,578.5 M781.2,647.4 785.6,646.2 789.3,645 M785.6,654.8 788,657.3 M785.6,617.9 792.9,620.3 M791.7,605.6 796.6,608.6" fill="none" stroke="#000" stroke-width="1.2"/>
<path d="M181.4,6 187.9,11.5 192.5,18.9 197.1,30 199.9,42.9 200.8,57.7 200.8,79.9 199,92.8 194.4,103.9 188.8,111.3 186.1,124.2 183.3,139 175.9,146.4 175,156 M200.8,70.6 206,69.7 M241.1,6 248.5,15.2 249.4,19.9 255.9,27.2 259.6,35.5 263.2,42.9 264.2,52.2 268.8,58.6 276.2,60.5 287.3,61 294.6,55.9 302,53.6 309.4,54 316.8,58.6 324.2,63.2 331.6,68.8 339,74.3 346.4,79.9 353.7,85.4 363,90.9 368.5,96.5 372.2,102 381.4,108.5 388.8,113.1 396.2,116.8 406,120.5 M241.1,6 233.7,13.4 229.1,20.8 228.2,31.9 228.2,42.9 226.3,52.2 221.7,61.4 214.3,66.9 206,69.7 M406,99.3 394.4,100.2 385.1,105.7 377.7,113.1 372.2,120.5 368.5,127.9 365.7,135.3 366.7,142.7 369.4,148.2 372.2,156 M346.4,156 353.7,150 363,147.3 372.2,146.4 381.4,143.6 390.7,139 398.1,137.1 406,133.4 M473.4,6 472.5,13.4 471.6,24.5 469.7,37.4 465.1,47.6 455.9,54 442.9,58.6 434.6,60.5 430.9,68.8 428.2,79.9 422.6,90.9 417.1,100.2 411.5,109.4 408.8,116.8 411.5,124.2 417.1,133.4 424.5,146.4 430,156 M406,101.1 417.1,102 428.2,106.6 434.6,112.2 436.5,124.2 435.5,135.3 431.9,146.4 430,156 M406,135.3 424.5,133.4 437.4,132.5 452.2,133.4 470.6,135.3 483.6,139 489.1,137.1 505.7,136.2 516.8,137.1 524.2,142.7 535.3,150 544.5,156 M588.8,6 587.9,15.2 586.1,24.5 590.7,33.7 598.1,41.1 604.5,48.5 605.4,59.6 601.8,70.6 599,79.9 601.8,89.1 606,96.5 M606,96.5 599.9,102 590.7,111.3 594.4,118.7 599.9,126 606,131.6 M606,133.4 609.7,139 613.4,148.2 622.6,149.1 633.7,149.1 642.9,147.3 652.2,144.5 659.6,142.7 666.9,135.3 676.2,131.6 687.3,127 698.3,120.5 705.7,117.7 713.1,113.1 724.2,106.6 733.4,101.1 742.7,95.6 751.9,90 763,85.4 772.2,80.8 783.3,78.9 794.4,75.3 806,71.6 M659.6,142.7 666.9,150 672.5,156 M613.4,148.2 606,153.7 M6,257.2 24.5,255.7 37.4,255.7 52.2,253.9 65.1,250.2 79.9,245.6 94.6,240 105.7,235.4 111.3,233.6 116.8,230.8 126,227.1 135.3,224.7 151.9,224.3 161.1,225.3 M175.9,156 168.5,165.2 163,174.5 155.6,187.4 148.2,198.5 145.4,204.9 148.2,213.2 151.9,222.5 161.1,225.3 M161.1,225.3 164.8,221.6 171.3,221 175,225.3 175,229.9 171.3,231.7 163.9,231.7 160.8,229.9 161.1,225.3 M175,225.3 183.3,218.8 192.5,213.2 198.1,209.6 206,205.5 M164.8,231.7 166.7,242.8 168.5,257.6 169.4,270.5 172.2,281.6 174.1,292.7 173.1,306 M206,204.9 213.4,200.3 220.8,194.8 222.6,190.2 235.5,184.6 248.5,179.1 261.4,174.5 276.2,169.9 289.1,166.2 302,164.3 313.1,161.5 326,160.6 339,158.8 344.5,156 M375.9,156 379.6,161.5 387,164.3 399.9,164.9 406,164.3 M401.8,156 399.9,165.2 398.1,174.5 396.2,192.9 397.1,211.4 399,229.9 396.2,244.6 393.4,257.6 394.4,270.5 396.2,285.3 397.1,296.4 396.2,306 M406,209.6 399.9,210.5 M406,165.2 417.1,162.5 428.2,158.8 431.9,156 M428.2,158.8 435.5,167.1 442.9,178.2 445.7,187.4 455.9,192.9 463.2,202.2 470.6,211.4 476.2,218.8 479.9,226.2 483.6,231.7 489.1,233.6 494.6,235.4 503.9,239.1 511.3,236.3 516.8,237.3 522.3,238.2 M522.3,238.2 531.6,233.6 539,226.2 546.4,220.6 553.7,209.6 559.3,202.2 566.7,192.9 574.1,183.7 583.3,172.6 592.5,161.5 598.1,156 M544.5,156 553.7,158.8 572.2,157.8 583.3,160.6 592.5,159.7 606,156.9 M503.9,239.1 499.3,248.3 496.5,261.3 490.9,270.5 485.4,283.4 478,294.5 470.6,306 M522.3,238.2 526,244.6 535.3,250.2 537.1,259.4 539,270.5 542.7,277.9 543.6,292.7 550,300 555.6,306 M577.7,306 583.3,298.2 584.2,293.6 M672.5,156 673.4,163.4 681.7,168.9 685.4,176.3 686.3,183.7 692.8,189.2 702,190.2 715,189.2 726,186.5 739,183.7 750,181.9 761.1,180 772.2,175.4 783.3,174.5 796.2,172.6 806,174.5 M715,189.2 720.5,198.5 727.9,207.7 735.3,216 744.5,216 750,224.3 757.4,233.6 760.2,241.9 763,252 764.8,263.1 768.5,274.2 770.4,281.6 M806,222.5 794.4,227.1 783.3,231.7 772.2,236.3 760.2,241.9 751.9,246.5 744.5,249.3 739,253.9 727.9,256.6 724.2,263.1 716.8,270.5 705.7,277 694.6,281.6 685.4,283.4 676.2,289 665.1,296.4 657.7,301 650.3,306 M739,253.9 740.8,261.3 750,268.7 759.3,276 770.4,281.6 779.6,287.1 787,294.5 792.5,301.9 798.1,306 M171.3,306 172.2,313.4 175,324.5 177.7,337.4 177.7,348.5 181.4,359.6 183.3,370.6 182.9,381.7 180.5,392.8 175.9,403.9 170.4,413.1 166.7,422.3 162,431.6 161.1,442.7 159.3,456 M399,306 399,317.1 399.9,330 401.8,342.9 401.8,357.7 402.7,368.8 406,376.2 M402.7,368.8 396.2,374.3 390.7,381.7 383.3,390.9 375.9,396.5 366.7,400.2 353.7,401.1 344.5,402 339,406.6 333.4,414 324.2,424.2 315,433.4 305.7,442.7 298.3,451.9 294.6,456 M406,381.7 398.1,385.4 388.8,386.3 M406,366.9 413.4,365.1 424.5,363.2 435.5,362.3 448.5,363.2 463.2,364.2 479.9,362.3 494.6,360.5 509.4,355.9 524.2,354 539,351.2 553.7,351.2 564.8,348.5 575.9,349.4 M406,379.9 411.5,370.6 417.1,361.4 424.5,352.2 435.5,342.9 448.5,333.7 457.7,324.5 463.2,315.2 469.7,306 M406,402 409.7,409.4 415.2,420.5 420.8,431.6 426.3,442.7 429.1,456 M575.9,349.4 572.2,357.7 566.7,366.9 561.1,374.3 555.6,383.6 551.9,392.8 548.2,402 542.7,409.4 535.3,416.8 527.9,426 524.2,429.7 516.8,439 509.4,448.2 500.2,456 M583.3,334.6 590.7,335.5 594.4,341.1 595.3,348.5 592.5,354.9 587,358.6 580.5,357.7 575.9,354 575,346.6 576.8,339.2 583.3,334.6 M555.6,306 559.3,317.1 568.5,322.6 574.1,331.9 583.3,350.3 M574.1,306 572.2,315.2 570.4,324.5 577.7,333.7 583.3,342.9 584.2,350.3 M606,330 596.2,335.5 587,344.8 583.3,350.3 M606,344.8 594.4,350.3 583.3,350.3 M583.3,350.3 588.8,361.4 596.2,368.8 601.8,379.9 606,387.3 M583.3,350.3 579.6,359.6 572.2,365.1 566.7,366.9 M606,326.3 615.2,321.7 626.3,318 635.5,314.3 644.8,309.7 650.3,306 M606,354 613.4,358.6 622.6,361.4 635.5,362.3 648.5,365.1 663.2,367.9 679.9,367.9 694.6,369.7 709.4,371.6 724.2,370.6 739,371.6 751.9,373.4 759.3,368.8 768.5,363.2 777.7,359.6 787,355.9 796.2,348.5 806,339.2 M606,394.6 609.7,403.9 615.2,411.3 622.6,416.8 628.2,422.3 635.5,426 642.9,431.6 645.7,439 654,446.4 663.2,451.9 672.5,455.6 M628.2,422.3 631.9,427.9 633.7,435.3 631.9,442.7 630.9,456 M633.7,435.3 638.3,429.7 M6,460.6 20.8,462.5 35.5,463.4 52.2,465.2 66.9,468 79.9,472.6 89.1,475.4 100.2,476.3 109.4,474.5 124.2,473.5 135.3,473.5 142.7,476.3 148.2,479.6 151.9,480 159.3,480 172.2,479.1 183.3,479.1 192.5,476.3 206,474.5 M159.3,456 156.5,463.4 154.7,470.8 152.8,480 148.2,489.2 142.7,498.5 137.1,509.6 134.3,520.6 132.5,533.6 130.7,548.3 129.7,566.8 129.7,585.3 127,598.2 126,606 M148.2,479.6 147.3,473.5 153.7,470.8 M206,476.3 220.8,475 235.5,474.5 252.2,474.1 261.4,474.5 268.8,470.8 279.9,468 287.3,461.5 294.6,456 M257.7,474.5 254,480 250.3,491.1 245.7,504 237.4,515.1 235.5,526.2 228.2,535.4 220.8,544.6 216.2,552 214.3,563.1 215.2,574.2 211.5,585.3 207.8,596.4 206,601.9 M406,535.4 398.1,544.6 390.7,555.7 381.4,563.1 372.2,570.5 363,577.9 353.7,585.3 344.5,590.8 335.3,596.4 326,598.2 316.8,601 310.3,606 M429.1,456 433.7,463.4 439.2,470.8 438.3,478.2 434.6,485.5 430,494.8 424.5,505.9 417.1,518.8 409.7,529.9 406,534.5 M439.2,471.7 450.3,473.5 461.4,471.7 476.2,467.1 489.1,462.5 498.3,456 M631.9,456 630,467.1 630,480 629.1,496.6 630.9,509.6 633.7,520.6 639.2,531.7 644.8,540.9 647.6,552 650.3,563.1 653.1,576 655.9,589 659.6,600 661.4,606 M672.5,456 683.6,459.7 694.6,462.5 707.6,466.2 720.5,468 733.4,469.9 746.4,471.7 759.3,472.6 772.2,478.2 785.1,483.7 798.1,486.5 806,491.1 M806,536.3 801.8,548.3 799.9,559.4 798.1,570.5 792.5,581.6 787,590.8 785.1,600 784.2,606 M6,661.4 15.2,660.5 24.5,655.9 35.5,652.2 48.5,648.5 63.2,643.9 74.3,642.9 83.6,645.7 89.1,644.8 98.3,641.1 113.1,640.2 127.9,640.2 142.7,640.2 151.9,642 161.1,646.6 170.4,652.2 179.6,655.9 190.7,655.9 198.1,654 206,652.2 M6,616.2 11.5,620.8 13.4,628.2 12.5,639.2 13.4,650.3 15.2,660.5 M126,606 126,617.1 127,628.2 128.8,639.2 133.4,646.6 136.2,654.9 134.3,665.1 132.5,674.3 M83.6,645.7 89.1,652.2 92.8,661.4 100.2,666.9 109.4,670.6 120.5,672.5 132.5,674.3 140.8,678.9 148.2,681.7 157.4,683.6 161.1,685.4 M161.1,685.4 168.5,679.9 175.9,670.6 181.4,663.2 185.1,655.9 186.1,646.6 189.7,641.1 192.5,631.9 198.1,620.8 201.8,611.5 203.6,606 M157.4,683.6 159.3,687.3 161.1,685.4 M206,652.2 213.4,649.4 224.5,646.6 239.2,643.9 254,642.9 265.1,644.8 276.2,642.9 287.3,640.2 296.5,636.5 303.9,630 306.6,622.6 307.6,611.5 309.4,606 M312.2,622.3 318.7,624.5 331.6,625.4 342.7,627.2 351.9,630.9 359.3,632.8 366.7,637.4 375.9,638.3 383.3,635.5 390.7,630 398.1,625.4 406,622.6 M406,621.7 415.2,619.3 424.5,618.6 433.7,618.9 442.9,616.2 452.2,620.8 461.4,621.7 468.8,618.9 476.2,615.2 487.3,615.2 494.6,617.4 505.7,617.1 515,615.6 522.3,618.9 531.6,623.5 539,626.3 546.4,627.2 555.6,629.1 564.8,633.7 572.2,637.4 581.4,640.2 590.7,638.9 598.1,639.6 606,640.2 M606,640.2 613.4,639.2 622.6,641.1 633.7,643.9 646.6,644.8 659.6,648.5 670.6,651.2 679.9,653.1 689.1,652.2 698.3,657.7 705.7,660.5 716.8,661.4 727.9,660.5 739,661.4 750,659.6 761.1,657.7 772.2,655.9 783.3,654.4 M661.4,606 665.1,613.4 670.6,622.6 678,631.9 685.4,640.2 692.8,644.8 698.3,654 705.7,661.4 711.3,668.8 715,679.9 718.7,689.1 721.4,700.2 726,709.4 731.6,716.8 737.1,724.2 741.7,733.4 744.5,742.7 746.4,756 M784.2,606 786.1,613.4 787,624.5 787.9,635.5 786.1,646.6 784.2,654.4 781.4,661.4 785.1,665.1 790.7,666.9 794.4,672.5 798.1,679.9 801.8,685.4 806,690.9 M786.1,644.8 780.5,646.6 778.1,654 778.7,661.4 781.4,665.1 M747.5,751.7 748.4,764 751.9,774.5 754.5,783.3 755,792.1" fill="none" stroke="#826c14" stroke-width="1"/>
<path d="M6,105.4 154.7,105.4 155.2,109.4 156.5,112.2 161.1,114 161.7,116.8 159.3,119.6 159.3,123.3 156.5,126 153.7,129.7 149.1,133.4 146.4,137.1 142.7,142.7 138,149.1 187,149.1 M206,29.1 203.6,31.9 201.8,33.7 202.7,37.4 206,39.2 M198.1,99.3 199,97.4 201.8,97 204,99.3 203.6,102.4 200.8,103.9 198.4,102.4 198.1,99.3 M200.8,103.9 199.9,105.7 203.6,107.6 199.9,111.3 194.4,115 196.2,120.5 199,124.2 194.4,126 188.8,127.9 190.7,133.4 196.2,137.1 190.7,142.7 188.8,148.2 187,149.1 187.9,153.7 190.7,156 M304.8,6 305.7,7.8 308.5,10.6 309.4,14.3 307.6,17.4 302,18.9 292.8,20.4 285.4,22.6 279.9,25.4 277.1,30 276.2,35.5 278,39.2 280.8,42 283.2,45.7 282.6,49.4 279.9,53.1 275.3,54.4 270.6,53.1 266.9,50.3 261.4,47.6 255.9,44.8 250.3,42.9 246.6,40.2 241.1,39.6 236.5,41.1 231.9,44.8 228.2,50.3 226.3,52.2 224.5,54.9 222.6,56.8 221.7,60.5 218.9,59.6 214.3,56.8 211.5,52.2 208.8,44.8 206,38.3 M206,18.9 208.2,22.6 207.8,29.1 206,29.6 M224.5,54.9 225.4,57.7 227.2,60.5 231.9,62.3 232.8,66 230.9,69.7 227.2,73.4 226.3,77.1 230,79.9 230.9,81.7 228.2,83.6 224.5,84.5 225.4,88.2 228.2,90.9 227.2,94.6 224.5,97.4 220.8,98.3 217.1,96.5 214.3,92.8 212.5,93.7 210.6,100.2 208.8,104.8 206,107.6 M208.8,104.8 265.1,105.4 311.3,105.4 312.7,98.3 310.3,89.1 313.1,88.7 325.1,90 326,91.9 363,91.5 406,90.6 M406,90.6 442.9,91.9 479.9,93.7 516.8,93.2 553.7,95 572.2,96.1 606,96.5 M606,96.5 635.5,96.9 679.9,96.1 740.8,96.5 766.7,95 787,94.6 806,97.4 M636.5,95.6 642.9,90.9 650.3,89.1 659.6,85.4 668.8,83.6 676.2,81.7 678,77.1 681.7,73.4 689.1,72.1 696.5,69.7 697.4,63.2 700.2,59.6 706.6,56.8 707.6,50.3 711.3,46.6 720.5,42 731.6,36.5 739,32.8 746.4,26.3 753.7,19.9 759.3,15.2 763.9,13 M748.2,6 751.9,9.7 759.3,11.2 764.8,13 763.9,17.1 763,19.9 766.7,23.5 767.6,28.2 772.2,32.8 777.7,34.6 781.4,39.2 787,42 794.4,40.2 801.8,36.5 806,32.8 M787,94.6 783.3,102 783.3,109.4 780.5,115 782.4,118.7 775.9,116.8 770.4,120.5 766.7,124.2 763,129.7 759.3,137.1 753.7,139 748.2,135.3 742.7,135.3 735.3,138 729.7,142.7 726,148.2 722.3,151.9 716.8,151.9 715.9,146.4 713.1,143.6 707.6,146.4 702,151.9 694.6,154.7 692.8,156 M192.5,156 190.7,158.8 186.1,157.8 184.2,160.6 187.9,163.4 186.1,166.2 180.5,167.1 175.9,170.8 171.3,170.8 169.4,174.5 172.2,178.2 175.9,179.1 175,182.8 170.4,184.6 171.3,189.2 172.2,192 168.5,192 166.7,189.2 163,190.2 162,193.9 163.9,197.6 160.2,195.7 156.5,197.6 153.7,200.3 152.8,203.1 155.6,204.9 160.2,204 163,202.2 161.1,205.9 155.6,206.8 153.7,210.5 154.7,214.2 158.4,215.1 159.3,218.8 157.4,221.6 160.2,223.4 159.3,227.1 154.7,226.2 152.8,229.9 151.9,233.6 146.4,235.4 142.7,237.3 143.6,240.9 147.3,242.8 147.3,247.4 143.6,250.2 139.9,252 136.2,253 134.3,249.3 131.6,247.4 129.7,250.2 131.6,253.9 129.7,257.6 126,256.6 124.2,261.3 127.9,263.1 131.6,261.3 131.6,266.8 127.9,270.5 124.2,267.7 122.3,271.4 124.2,276 122.3,281.6 123.3,287.1 122.3,291.7 116.8,293.6 111.3,296.4 109.4,300 103.9,301.9 102,306 M143.6,238.2 206,238.2 M206,238.2 299.3,237.8 335.3,237.3 357.4,237.6 406,237.6 M299.3,237.8 301.1,241.9 306.6,246.5 307.2,252 305.7,266.8 303.9,285.3 302,306 M406,238.2 470.6,238.5 492.8,239.5 522.3,239.5 588.8,239.5 606,239.5 M492.8,239.5 494.6,252 497.4,266.8 500.2,285.3 503.9,306 M588.8,239.5 588.8,229.9 590.7,217.9 596.2,214.7 598.1,216 606,215.1 M692.8,156 693.7,159.7 691.9,164.3 688.2,168.9 681.7,168 676.2,170.8 670.6,173.5 665.1,178.2 659.6,180 654,185.5 648.5,188.3 641.1,186.5 630,188.3 620.8,192 615.2,196.6 610.6,202.2 609.7,209.6 606,214.2 M606,239.5 642.9,239.1 679.9,238.2 M679.9,238.2 689.1,234.5 703.9,230.8 709.4,227.1 716.8,226.2 724.2,223.4 731.6,220.6 739,220.6 761.1,221 790.7,222.5 806,223.4 M679.9,238.2 678,242.8 670.6,247.4 665.1,253.9 661.4,263.1 663.2,268.7 670.6,272.3 676.2,276 681.7,282.5 687.3,284.3 694.6,283.4 697.4,289 700.2,294.5 703.9,301.9 705.7,306 M98.3,306 102,308.8 105.7,310.6 104.8,314.3 100.2,315.2 96.5,314.3 97.4,318 101.1,319.9 100.2,324.5 96.5,327.2 90.9,329.1 85.4,330 88.2,332.8 91.9,331.9 90,335.5 87.3,338.3 86.3,342 89.1,345.7 92.4,346.6 90.9,349.4 86.3,348.1 82.6,346.6 80.8,349.4 81.7,353.1 84.5,354.9 87.3,356.8 89.1,354.9 87.3,353.1 83.6,353.6 79.9,354 76.2,354.4 74.7,356.8 77.1,359.6 79.9,361.4 81.7,365.1 79.9,368.8 77.1,370.6 75.3,374.3 74.7,377.1 78,378 81.7,377.1 83.6,374.3 80.8,371.6 78.9,373.4 79.9,378.9 82.6,381.7 85.4,379.9 87.3,377.1 85.8,375.3 83.6,378.9 81.7,383.6 79.9,387.3 80.8,390.9 83.6,393.7 87.3,394.6 88.2,391.9 86.3,390.6 84.5,392.8 85.4,397.4 85.4,402 82.6,404.8 78.9,403.9 76.5,406.6 78,409.4 80.8,412.2 79.9,415 77.1,417.7 75.3,421.4 77.1,425.1 80.8,424.2 81.7,420.5 80.8,417.7 83.6,416.8 86.3,420.5 86.3,426 83.6,429.7 79.9,431.6 78.9,436.2 81.7,439.9 86.3,441.7 87.3,445.4 83.6,447.3 80.8,450 81.7,453.7 85.4,454.7 89.1,452.8 90.9,450 89.1,448.2 87.3,451.9 86.3,456 M6,415.3 79.9,415.3 M301.7,306 299.3,324.5 296.5,346.6 293.7,368.8 290.9,398.3 288.2,426 285.4,456 M504.2,306 507.6,324.5 512.2,352.2 516.8,379.9 521.4,407.6 525.1,429.7 527,435.3 528.8,440.8 530.1,448.2 533.4,456 M705.7,306 706.6,311.5 711.3,317.1 716.8,326.3 722.3,331.9 729.7,337.4 737.1,342.9 742.7,350.3 746.4,359.6 751.9,364.2 757.4,365.1 761.1,370.6 766.7,376.2 765.7,383.6 769.4,387.3 772.2,389.1 774.1,394.6 778.7,398.3 778.7,403.9 783.3,405.7 790.7,409.4 796.2,413.1 799,420.5 799.9,427.9 803.6,433.4 804.5,440.8 806,446.4 M86.3,456 83.6,458.8 83.2,462.5 85.4,465.2 90,466.2 93.7,467.1 95.6,470.8 99.3,471.7 100.6,473.5 98.3,476.3 94.6,478.2 92.8,481.9 90.9,485.5 85.4,484.6 79.9,487.4 78.4,492 80.8,494.8 85.4,495.7 90,493.9 90.9,491.1 88.2,497.6 85.4,500.3 84.5,504.9 80.8,507.7 77.1,509.6 73.4,514.2 69.7,517.9 66,519.7 65.1,523.4 67.9,527.1 71.6,526.2 70.6,523.4 66.9,525.3 63.2,528 61.4,533.6 60.5,538.2 57.7,540 54.4,538.2 54.9,540.9 58.6,542.8 59.6,546.5 55.9,550.2 52.2,553.9 48.8,557.2 49.4,560.3 53.1,561.3 55.9,559.4 53.1,563.1 52.2,567.7 49.4,570.5 43.9,570.9 42.9,572.3 46.6,576 47.6,579.7 44.8,581.6 45.7,585.3 49.4,588 48.5,591.7 44.8,594.1 M44.8,594.1 186.1,594.1 M186.1,594.1 186.6,597.3 184.2,601 183.3,606 M285.4,456 282.6,474.5 280.2,502.2 279.5,520.6 280.8,548.3 281.7,576 282.6,606 M344.5,594.1 406,594.1 M344.5,594.1 345.4,597.3 343.6,601.9 341.7,606 M534.3,456 538,459.7 539.9,467.1 537.5,474.5 541.7,478.2 546,480.9 544.5,484.6 539,486.5 535.3,489.2 533.4,494.8 533.4,502.2 531.6,509.6 528.8,516.9 527.9,524.3 529.7,531.7 532.5,539.1 533.8,546.5 532.5,555.7 530.7,565 529.4,574.2 530.7,579.7 534.3,585.3 536.2,590.8 537.5,594.1 539,600 541.7,606 M406,594.1 537.5,594.1 M183.3,606 179.6,611.5 177.7,618.9 178.7,626.3 181.4,633.7 186.1,638.3 189.7,642.9 190.7,650.3 193.4,655.9 194.4,663.2 196.2,666.9 M283.6,606 284.5,624.5 285,650.3 M341.7,606 346.4,611.5 351.9,617.1 357.4,622.6 359.3,628.2 357.4,633.7 355.6,639.2 359.3,642.9 M547.3,619.9 572.2,621.1 606,623 M606,623 642.9,625.4 679.9,628.2 716.8,630.4 744.5,632.2 M744.5,632.2 745.4,639.2 746.4,646.6 749.1,650.3 753.7,651.2 758.4,650.3 759.3,642.9 760.2,635.5 758.4,628.2 757.4,620.8 758.4,613.4 763,610.1 768.5,609.3 775.9,611.5 783.3,615.2 790.7,618 798.1,619.9" fill="none" stroke="#000" stroke-width="1"/>
<g shape-rendering="crispEdges"><circle cx="407" cy="407" r="39.5" fill="none" stroke="#f2f2f2" stroke-width="0.9"/><circle cx="407" cy="407" r="159.5" fill="none" stroke="#f2f2f2" stroke-width="0.9"/><circle cx="407" cy="407" r="279.5" fill="none" stroke="#f2f2f2" stroke-width="0.9"/><circle cx="407" cy="407" r="399.5" fill="none" stroke="#f2f2f2" stroke-width="0.9"/><circle cx="407" cy="407" r="519.5" fill="none" stroke="#f2f2f2" stroke-width="0.9"/></g><rect x="396.0" y="3.5" width="22" height="8" fill="#5d4f4b"/><text x="405.9" y="11.1" text-anchor="middle" class="rl">313</text><rect x="396.0" y="123.5" width="22" height="8" fill="#5d4f4b"/><text x="405.9" y="131.1" text-anchor="middle" class="rl">219</text><rect x="396.0" y="243.5" width="22" height="8" fill="#5d4f4b"/><text x="405.9" y="251.1" text-anchor="middle" class="rl">125</text><text x="405.9" y="371.1" text-anchor="middle" class="rl">31</text><circle cx="407" cy="407" r="39.5" fill="none" stroke="#ff0000" stroke-width="1.25" stroke-dasharray="13 0.9" shape-rendering="crispEdges"/>
<path fill="#f0a400" d="M777,623h7v1h-7z M792,625h3v1h-3zM790,626h2v1h-2zM795,626h2v1h-2zM790,627h1v1h-1zM796,627h1v1h-1zM789,628h1v1h-1zM797,628h1v1h-1zM789,629h1v1h-1zM797,629h1v1h-1zM789,630h1v1h-1zM797,630h1v1h-1zM790,631h1v1h-1zM796,631h1v1h-1zM790,632h2v1h-2zM795,632h2v1h-2zM792,633h3v1h-3z M791,629h5v1h-5z M793,627h1v5h-1z"/>
<path fill="#f8d800" d="M778,677h3v1h-3zM776,678h2v1h-2zM781,678h2v1h-2zM776,679h1v1h-1zM782,679h1v1h-1zM775,680h1v1h-1zM783,680h1v1h-1zM775,681h1v1h-1zM783,681h1v1h-1zM775,682h1v1h-1zM783,682h1v1h-1zM776,683h1v1h-1zM782,683h1v1h-1zM776,684h2v1h-2zM781,684h2v1h-2zM778,685h3v1h-3z M777,681h5v1h-5z"/>

</svg>
<div id="legend"><div class="in"></div>
<span style="left:13px;top:763px">Symbols</span><span style="left:53px;top:763px">-CG</span><span style="left:78px;top:763px">-IC</span><span style="left:99px;top:763px">+CG</span><span style="left:124px;top:763px">+IC</span><span style="left:153px;top:763px">Strike age color codes</span>
<span style="left:13px;top:776px">Recent</span><span style="left:13px;top:789px">Old</span>
<span style="left:153px;top:776px;color:#f0c800">15+</span><span style="left:188px;top:776px;color:#e8a000">30+</span><span style="left:223px;top:776px;color:#e08800">45+</span>
<span style="left:153px;top:789px;color:#e07000">60+</span><span style="left:188px;top:789px;color:#e05800">75+</span><span style="left:223px;top:789px;color:#e83000">90+</span>
<svg width="260" height="60" viewBox="0 750 260 60" style="position:absolute;left:0;top:750px" shape-rendering="crispEdges">
<path fill="#00e8f0" d="M59,776h3v1h-3zM57,777h2v1h-2zM62,777h2v1h-2zM57,778h1v1h-1zM63,778h1v1h-1zM56,779h1v1h-1zM64,779h1v1h-1zM56,780h1v1h-1zM64,780h1v1h-1zM56,781h1v1h-1zM64,781h1v1h-1zM57,782h1v1h-1zM63,782h1v1h-1zM57,783h2v1h-2zM62,783h2v1h-2zM59,784h3v1h-3z M58,780h5v1h-5z M82,780h7v1h-7z M109,776h3v1h-3zM107,777h2v1h-2zM112,777h2v1h-2zM107,778h1v1h-1zM113,778h1v1h-1zM106,779h1v1h-1zM114,779h1v1h-1zM106,780h1v1h-1zM114,780h1v1h-1zM106,781h1v1h-1zM114,781h1v1h-1zM107,782h1v1h-1zM113,782h1v1h-1zM107,783h2v1h-2zM112,783h2v1h-2zM109,784h3v1h-3z M108,780h5v1h-5z M110,778h1v5h-1z M132,780h7v1h-7z M135,777h1v7h-1z"/>
<path fill="#f8f000" d="M59,789h3v1h-3zM57,790h2v1h-2zM62,790h2v1h-2zM57,791h1v1h-1zM63,791h1v1h-1zM56,792h1v1h-1zM64,792h1v1h-1zM56,793h1v1h-1zM64,793h1v1h-1zM56,794h1v1h-1zM64,794h1v1h-1zM57,795h1v1h-1zM63,795h1v1h-1zM57,796h2v1h-2zM62,796h2v1h-2zM59,797h3v1h-3z M58,793h5v1h-5z M82,793h7v1h-7z M109,789h3v1h-3zM107,790h2v1h-2zM112,790h2v1h-2zM107,791h1v1h-1zM113,791h1v1h-1zM106,792h1v1h-1zM114,792h1v1h-1zM106,793h1v1h-1zM114,793h1v1h-1zM106,794h1v1h-1zM114,794h1v1h-1zM107,795h1v1h-1zM113,795h1v1h-1zM107,796h2v1h-2zM112,796h2v1h-2zM109,797h3v1h-3z M108,793h5v1h-5z M110,791h1v5h-1z M132,793h7v1h-7z M135,790h1v7h-1z"/>
</svg>
</div>
<div id="copy"><span style="position:absolute;left:4px;top:-0.5px">©2005 Astrogenic Systems</span></div>

<!-- panel 1 -->
<div class="panel" style="left:812px;top:8px;width:320px;height:320px"></div>
<div class="btn" style="left:819px;top:16px;width:58px;background:#580000;border:1px solid #dcdcdc;color:#d8d0d0">STRIKE</div>
<div class="btn" style="left:883px;top:16px;width:58px;background:#383838;border:1px solid #c0c0c0;color:#b4b4b4">NOISE</div>
<div class="btn" style="left:994px;top:16px;width:128px;background:#383838;border:1px solid #c0c0c0;color:#fff;text-align:left;letter-spacing:0"><span style="position:absolute;left:3px">Bng 126°</span><span style="position:absolute;right:3px;color:#00e800">362mi</span></div>
<div class="lab" style="left:821px;top:64px;width:82px">Strikes/min</div>
<div class="lab" style="left:931px;top:64px;width:82px">Close/min</div>
<div class="lab" style="left:1041px;top:64px;width:82px">Noises/min</div>
<div class="big" style="left:821px;top:89px;width:82px">0</div>
<div class="big" style="left:931px;top:89px;width:82px">0</div>
<div class="big" style="left:1041px;top:89px;width:82px;color:#c0c0c0">1</div>
<div class="abs r" style="left:803px;top:131px;width:100px">Total Strikes</div>
<div class="abs r" style="left:913px;top:131px;width:100px">Total Close</div>
<div class="abs r" style="left:1023px;top:131px;width:100px">Total Noises</div>
<div class="abs r" style="left:803px;top:149px;width:100px">57</div>
<div class="abs r" style="left:913px;top:149px;width:100px">0</div>
<div class="abs r" style="left:1023px;top:149px;width:100px">88</div>
<div class="abs g" style="left:821px;top:203px">Lightning type distribution</div>
<div class="hl" style="left:821px;top:217px;width:303px"></div>
<div class="abs b" style="left:821px;top:225px">Cloud-ground</div>
<div class="abs" style="left:912px;top:225px">+</div>
<div class="bar" style="left:925px;top:227px"><i style="width:22px;background:#f00000"></i></div>
<div class="abs b" style="left:979px;top:225px;letter-spacing:-0.2px">44%</div>
<div class="abs b" style="left:1015px;top:225px">−</div>
<div class="bar" style="left:1028px;top:227px"><i style="width:21px;background:#99ccff"></i></div>
<div class="abs b" style="left:1082px;top:225px;letter-spacing:-0.2px">42%</div>
<div class="abs b g" style="left:821px;top:249px">Count</div>
<div class="abs b" style="left:925px;top:249px">25</div>
<div class="abs b" style="left:1028px;top:249px">24</div>
<div class="abs b" style="left:821px;top:279px">Intracloud</div>
<div class="abs" style="left:912px;top:279px">+</div>
<div class="bar" style="left:925px;top:281px"><i style="width:3px;background:#ff60b0"></i></div>
<div class="abs b" style="left:979px;top:279px">7%</div>
<div class="abs b" style="left:1015px;top:279px">−</div>
<div class="bar" style="left:1028px;top:281px"><i style="width:3px;background:#00e800"></i></div>
<div class="abs b" style="left:1082px;top:279px">7%</div>
<div class="abs b g" style="left:821px;top:303px">Count</div>
<div class="abs b" style="left:925px;top:303px">4</div>
<div class="abs b" style="left:1028px;top:303px">4</div>

<!-- panel 2 -->
<div class="panel" style="left:812px;top:333px;width:320px;height:115px"></div>
<div class="abs b gr" style="left:821px;top:338px;font-size:16.5px;letter-spacing:0;line-height:18px">3/13/2026 5:50:11 PM</div>
<div class="hl" style="left:821px;top:358px;width:303px"></div>
<div class="abs" style="left:821px;top:376px">Squelch</div><div class="abs" style="left:909px;top:376px">0</div><div class="abs" style="left:981px;top:376px">Upload</div><div class="abs g" style="left:1061px;top:376px">Disabled</div>
<div class="abs" style="left:821px;top:396px">Persistence</div><div class="abs" style="left:909px;top:396px">90 min</div><div class="abs" style="left:981px;top:396px">Capture</div><div class="abs gr" style="left:1061px;top:396px">Active</div>
<div class="abs" style="left:821px;top:416px">Range</div><div class="abs" style="left:909px;top:416px">313 mi</div><div class="abs" style="left:981px;top:416px">Receiver</div><div class="abs gr" style="left:1061px;top:416px">Enabled</div>

<!-- panel 3 -->
<div class="panel" style="left:812px;top:453px;width:320px;height:350px"></div>
<div class="abs g" style="left:821px;top:463px">Uptime</div><div class="abs" style="left:909px;top:463px">1445:35</div><div class="abs g" style="left:981px;top:463px">Peak time</div><div class="abs g" style="left:1061px;top:463px">Plot</div>
<div class="abs g" style="left:821px;top:486px">Peak rate</div><div class="abs" style="left:909px;top:486px">4/min</div><div class="abs" style="left:981px;top:486px">12:17 AM</div><div class="abs" style="left:1061px;top:486px">Strike</div>
<div class="abs g" style="left:822px;top:516px">Trend graph</div><div class="abs" style="left:909px;top:516px">60 min</div>
<svg width="320" height="280" viewBox="812 530 320 280" style="position:absolute;left:812px;top:530px" shape-rendering="crispEdges" fill="none" stroke="#c8c8c8" stroke-width="1">
<path d="M1088.5,542V778M822,777.5H1089M1085,542.5h4M1086,581.5h3M1085,620.5h4M1086,660.5h3M1085,699.5h4M1086,738.5h3M822.5,775v4M866.5,775v4M911.5,775v4M955.5,775v4M999.5,775v4M1044.5,775v4"/>
<path stroke="#fff" shape-rendering="auto" d="M873.5,777.5L875.3,769.5H877.7L879.5,777.5M921.5,777.5L923.5,769.5H927.5L929.7,777.5M938.3,777.5L939.3,769.5H942.3L944.7,777.5L946.7,769.5H950L952.2,777.5M962.3,777.5L963.8,769.5H966.4L968.7,777.5"/>
</svg>
<div class="ax" style="left:1093px;top:535px">30</div><div class="ax" style="left:1093px;top:614px">20</div><div class="ax" style="left:1093px;top:692px">10</div>
<div class="ax" style="left:820px;top:783px">60</div><div class="ax" style="left:864px;top:783px">50</div><div class="ax" style="left:909px;top:783px">40</div><div class="ax" style="left:953px;top:783px">30</div><div class="ax" style="left:998px;top:783px">20</div><div class="ax" style="left:1042px;top:783px">10</div><div class="ax" style="left:1087px;top:783px">0</div><div class="ax" style="left:1100px;top:783px">min</div>
</body></html>
